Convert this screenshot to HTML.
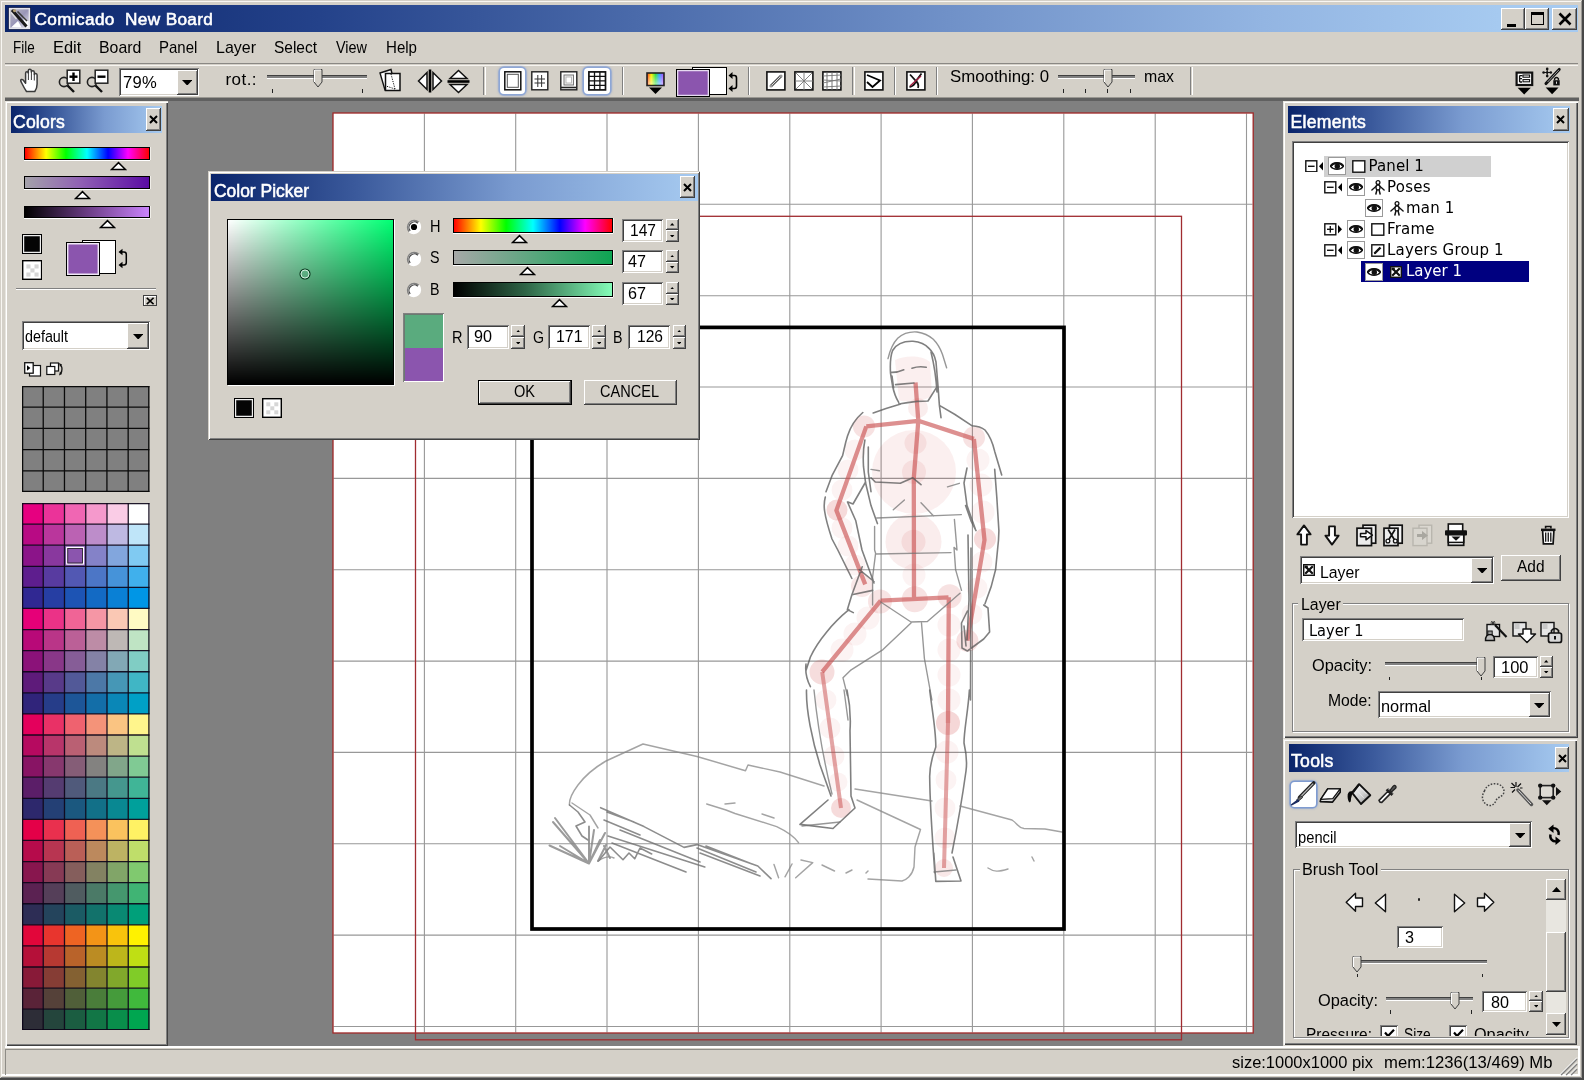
<!DOCTYPE html>
<html><head><meta charset="utf-8"><title>Comicado New Board</title>
<style>
html,body{margin:0;padding:0;}
body{width:1584px;height:1080px;overflow:hidden;background:#d4d0c8;position:relative;font-family:"Liberation Sans",sans-serif;}
#app{position:absolute;left:0;top:0;width:1584px;height:1080px;overflow:hidden;filter:blur(0.55px);}
#app div,#app span,#app svg{position:absolute;display:block;}
#app span{white-space:nowrap;}
</style></head><body><div id="app">
<div style="left:0px;top:0px;width:1584px;height:1080px;background:#d4d0c8;"></div>
<div style="left:1px;top:1px;width:1581px;height:1.2px;background:#f8f6f2;"></div>
<div style="left:1px;top:1px;width:1.2px;height:1076.5px;background:#f8f6f2;"></div>
<div style="left:0px;top:1077.8px;width:1584px;height:2.2px;background:#484848;"></div>
<div style="left:1582.2px;top:0px;width:1.8px;height:1080px;background:#484848;"></div>
<div style="left:2px;top:1074.3px;width:1578px;height:1.6px;background:#fff;"></div>
<div style="left:1px;top:1077px;width:1581px;height:1px;background:#808080;"></div>
<div style="left:1581px;top:1px;width:1.2px;height:1077px;background:#9a9894;"></div>
<div style="left:5px;top:5px;width:1573px;height:27.3px;background:linear-gradient(90deg,#0a246a 0%,#24428a 20%,#4a6aaa 40%,#7091c8 60%,#93b5e2 80%,#a6caf0 95%);"></div>
<svg style="left:8px;top:7px;" width="23" height="23" viewBox="0 0 23 23"><defs><linearGradient id="ig" x1="0" y1="0" x2="1" y2="1"><stop offset="0" stop-color="#b8b8c0"/><stop offset=".5" stop-color="#9a96b8"/><stop offset="1" stop-color="#e8e8f0"/></linearGradient></defs><rect x=".3" y=".3" width="22.4" height="22.4" fill="#0c1234"/><rect x="1.6" y="1.6" width="19.8" height="19.8" fill="url(#ig)" stroke="#e4e4ea" stroke-width="1.5"/><path d="M3 20.5L10 14L13.5 20.5Z" fill="#fff"/><path d="M15 9L20.5 14.5V20.5H17Z" fill="#fff" fill-opacity=".9"/><path d="M4 3L18.5 19.5" stroke="#1a1a1a" stroke-width="3"/><path d="M9.5 4.5L19 14" stroke="#3a3a3a" stroke-width="1.6"/><path d="M3 5.5L8.5 12" stroke="#ddd" stroke-width="1.3"/><circle cx="6.5" cy="3.6" r="1.6" fill="#b09c70"/></svg>
<span style="left:34.5px;top:8.0px;font-size:17.2px;line-height:22px;font-family:'Liberation Sans',sans-serif;color:#fff;letter-spacing:0.36px;-webkit-text-stroke:0.55px #fff;">Comicado&nbsp; New Board</span>
<div style="left:1501px;top:7.5px;width:24px;height:22.5px;background:#d4d0c8;box-shadow:inset -1px -1px #404040,inset 1px 1px #fff,inset -2px -2px #808080,inset 2px 2px #d4d0c8;"></div>
<div style="left:1525px;top:7.5px;width:24px;height:22.5px;background:#d4d0c8;box-shadow:inset -1px -1px #404040,inset 1px 1px #fff,inset -2px -2px #808080,inset 2px 2px #d4d0c8;"></div>
<div style="left:1552px;top:7.5px;width:24.5px;height:22.5px;background:#d4d0c8;box-shadow:inset -1px -1px #404040,inset 1px 1px #fff,inset -2px -2px #808080,inset 2px 2px #d4d0c8;"></div>
<div style="left:1507px;top:24px;width:9px;height:3px;background:#000;"></div>
<div style="left:1530.5px;top:11.5px;width:13px;height:13px;border:1.5px solid #000;border-top-width:3px;box-sizing:border-box;"></div>
<svg style="left:1557.5px;top:11.5px;" width="14" height="14" viewBox="0 0 14 14"><path d="M1.5 1.5L12.5 12.5M12.5 1.5L1.5 12.5" stroke="#000" stroke-width="2.6" fill="none"/></svg>
<span style="left:12.7px;top:36.7px;font-size:17px;line-height:22px;font-family:'Liberation Sans',sans-serif;color:#000;transform:scaleX(0.7921);transform-origin:0 50%;">File</span>
<span style="left:52.7px;top:36.7px;font-size:17px;line-height:22px;font-family:'Liberation Sans',sans-serif;color:#000;transform:scaleX(0.9661);transform-origin:0 50%;">Edit</span>
<span style="left:98.7px;top:36.7px;font-size:17px;line-height:22px;font-family:'Liberation Sans',sans-serif;color:#000;transform:scaleX(0.9324);transform-origin:0 50%;">Board</span>
<span style="left:159.3px;top:36.7px;font-size:17px;line-height:22px;font-family:'Liberation Sans',sans-serif;color:#000;transform:scaleX(0.8808);transform-origin:0 50%;">Panel</span>
<span style="left:215.7px;top:36.7px;font-size:17px;line-height:22px;font-family:'Liberation Sans',sans-serif;color:#000;transform:scaleX(0.9406);transform-origin:0 50%;">Layer</span>
<span style="left:274.3px;top:36.7px;font-size:17px;line-height:22px;font-family:'Liberation Sans',sans-serif;color:#000;transform:scaleX(0.9101);transform-origin:0 50%;">Select</span>
<span style="left:335.7px;top:36.7px;font-size:17px;line-height:22px;font-family:'Liberation Sans',sans-serif;color:#000;transform:scaleX(0.8483);transform-origin:0 50%;">View</span>
<span style="left:385.7px;top:36.7px;font-size:17px;line-height:22px;font-family:'Liberation Sans',sans-serif;color:#000;transform:scaleX(0.8866);transform-origin:0 50%;">Help</span>
<div style="left:5px;top:62.8px;width:1573px;height:1.2px;background:#8a8884;"></div>
<div style="left:5px;top:64.6px;width:1573px;height:1.3px;background:#f6f4f0;"></div>
<div style="left:5px;top:98.3px;width:1574px;height:2.3px;background:#606060;"></div>
<div style="left:5px;top:97.3px;width:1574px;height:1px;background:#9a9892;"></div>
<svg style="left:19px;top:67px;" width="22" height="27" viewBox="0 0 22 27"><path d="M7.5 24.5C5 21 3.5 17.5 1.8 14.2C1.2 12.6 3 11.8 4.2 13L6.6 16.2V6.2C6.6 4.4 9.2 4.4 9.3 6.2V3.6C9.4 1.8 12.2 1.8 12.3 3.6V5C12.5 3.4 15.2 3.5 15.3 5.2V7.5C15.6 6 18 6.2 18.1 8V17C18.1 20.5 17.2 22.5 15.8 24.5Z" fill="#fff" stroke="#3a3a3a" stroke-width="1.5" stroke-linejoin="round"/><path d="M9.4 6.5V13M12.4 5V13M15.3 7.5V13.5" stroke="#3a3a3a" stroke-width="1" fill="none"/></svg>
<svg style="left:58.3px;top:66px;" width="23" height="28" viewBox="0 0 23 28"><circle cx="6" cy="16" r="4.6" fill="#d4d0c8" stroke="#222" stroke-width="1.6"/><path d="M9.5 19.5L16 26" stroke="#111" stroke-width="2.4"/><rect x="9.2" y="4.2" width="12.6" height="13" fill="#fff" stroke="#222" stroke-width="1.5"/><path d="M11.5 10.7H19.5" stroke="#000" stroke-width="2.4"/><path d="M15.5 6.5V15" stroke="#000" stroke-width="2.4"/></svg>
<svg style="left:86.2px;top:66px;" width="23" height="28" viewBox="0 0 23 28"><circle cx="6" cy="16" r="4.6" fill="#d4d0c8" stroke="#222" stroke-width="1.6"/><path d="M9.5 19.5L16 26" stroke="#111" stroke-width="2.4"/><rect x="9.2" y="4.2" width="12.6" height="13" fill="#fff" stroke="#222" stroke-width="1.5"/><path d="M11.5 10.7H19.5" stroke="#000" stroke-width="2.4"/></svg>
<div style="left:119px;top:68px;width:80px;height:27.5px;background:#fff;box-shadow:inset 1px 1px #808080,inset -1px -1px #fff,inset 2px 2px #404040,inset -2px -2px #d4d0c8;"></div>
<div style="left:176.5px;top:70px;width:21.5px;height:24.5px;background:#d4d0c8;box-shadow:inset -1px -1px #404040,inset 1px 1px #fff,inset -2px -2px #808080,inset 2px 2px #d4d0c8;"></div>
<svg style="left:182.05px;top:79.75px;" width="10.4" height="5.6" viewBox="0 0 10.4 5.6"><path d="M0 0H10.4L5.2 5.6Z" fill="#000"/></svg>
<span style="left:123px;top:71.7px;font-size:16.6px;line-height:22px;font-family:'Liberation Sans',sans-serif;color:#000;letter-spacing:0.26px;">79%</span>
<span style="left:225.5px;top:68.8px;font-size:17px;line-height:22px;font-family:'Liberation Sans',sans-serif;color:#000;letter-spacing:0.44px;">rot.:</span>
<div style="left:267px;top:74.5px;width:100px;height:3px;background:#808080;box-shadow:0 1px #fff,inset 0 1px #404040;"></div>
<svg style="left:312.8px;top:69px;" width="11" height="19" viewBox="0 0 11 19"><path d="M1 0.5H9V13L5.0 18L1 13Z" fill="#d4d0c8" stroke="#404040" stroke-width="1"/><path d="M1.5 13V1H8" fill="none" stroke="#fff" stroke-width="1"/></svg>
<div style="left:271.5px;top:89px;width:1.3px;height:3.5px;background:#222;"></div>
<div style="left:361.5px;top:89px;width:1.3px;height:3.5px;background:#222;"></div>
<svg style="left:378px;top:68px;" width="24" height="24" viewBox="0 0 24 24"><path d="M2 5L13 1.5L17.5 20L7 22Z" fill="#fff" stroke="#111" stroke-width="1.4"/><rect x="7.5" y="5.5" width="14.5" height="17" fill="#fff" stroke="#111" stroke-width="1.5"/><path d="M13 6L17 21M17 21L8 18" stroke="#111" stroke-width="1" stroke-dasharray="1.2 1.2" fill="none"/></svg>
<svg style="left:417px;top:69px;" width="26" height="24" viewBox="0 0 26 24"><path d="M10 3.5V20.5L1.5 12Z M16 3.5V20.5L24.5 12Z" fill="#fff" stroke="#111" stroke-width="1.5" stroke-linejoin="miter"/><path d="M13 0.5V23.5" stroke="#000" stroke-width="2.6"/></svg>
<svg style="left:447px;top:69px;" width="24" height="25" viewBox="0 0 24 25"><path d="M3 9.5H20L11.5 1.5Z M3 15.5H20L11.5 23.5Z" fill="#fff" stroke="#111" stroke-width="1.5"/><path d="M0.5 12.5H22.5" stroke="#000" stroke-width="2.6"/></svg>
<div style="left:483.3px;top:67px;width:1.2px;height:28px;background:#808080;"></div>
<div style="left:484.6px;top:67px;width:1.2px;height:28px;background:#fff;"></div>
<div style="left:621.7px;top:67px;width:1.2px;height:28px;background:#808080;"></div>
<div style="left:623px;top:67px;width:1.2px;height:28px;background:#fff;"></div>
<div style="left:747.8px;top:67px;width:1.2px;height:28px;background:#808080;"></div>
<div style="left:749.1px;top:67px;width:1.2px;height:28px;background:#fff;"></div>
<div style="left:852.3px;top:67px;width:1.2px;height:28px;background:#808080;"></div>
<div style="left:853.6px;top:67px;width:1.2px;height:28px;background:#fff;"></div>
<div style="left:894px;top:67px;width:1.2px;height:28px;background:#808080;"></div>
<div style="left:895.3px;top:67px;width:1.2px;height:28px;background:#fff;"></div>
<div style="left:935.7px;top:67px;width:1.2px;height:28px;background:#808080;"></div>
<div style="left:937px;top:67px;width:1.2px;height:28px;background:#fff;"></div>
<div style="left:1190.3px;top:67px;width:1.2px;height:28px;background:#808080;"></div>
<div style="left:1191.6px;top:67px;width:1.2px;height:28px;background:#fff;"></div>
<div style="left:499.5px;top:68px;width:25px;height:26px;background:#fff;border-radius:4px;box-shadow:0 0 0 1.5px #8da6d6, 0 0 2px 2px rgba(120,150,210,.55);"></div>
<svg style="left:503.5px;top:71px;" width="18" height="20" viewBox="0 0 18 20"><rect x=".8" y=".8" width="16" height="18" fill="#fff" stroke="#111" stroke-width="1.5"/><rect x="3.3" y="3.3" width="11" height="13" fill="#fff" stroke="#555" stroke-width="1"/></svg>
<svg style="left:531px;top:71px;" width="18" height="20" viewBox="0 0 18 20"><rect x=".8" y=".8" width="16" height="18" fill="#fff" stroke="#222" stroke-width="1.4"/><path d="M6.8 4V16M10.6 4V16M3.5 8H14M3.5 12H14" stroke="#333" stroke-width="1"/></svg>
<svg style="left:559.5px;top:71px;" width="18" height="20" viewBox="0 0 18 20"><rect x=".8" y=".8" width="16" height="18" fill="#fff" stroke="#222" stroke-width="1.4"/><rect x="4" y="4" width="9.5" height="10" fill="#eee" stroke="#777" stroke-width="1"/><rect x="6" y="6" width="5.5" height="6" fill="#fff" stroke="#aaa" stroke-width=".8"/><path d="M1 16.5H16.5" stroke="#222" stroke-width="1.6"/></svg>
<div style="left:583.5px;top:68px;width:26px;height:26px;background:#fff;border-radius:4px;box-shadow:0 0 0 1.5px #8da6d6, 0 0 2px 2px rgba(120,150,210,.55);"></div>
<svg style="left:587.5px;top:71px;" width="19" height="20" viewBox="0 0 19 20"><rect x=".9" y=".9" width="16.6" height="18" fill="#fff" stroke="#111" stroke-width="1.7"/><path d="M6.5 1V19M11.9 1V19M1 5.3H17.5M1 9.8H17.5M1 14.3H17.5" stroke="#111" stroke-width="1.3"/></svg>
<svg style="left:646px;top:71.5px;" width="19" height="24" viewBox="0 0 19 24"><defs><linearGradient id="rb" x1="0" x2="1" y1="0" y2="0"><stop offset="0" stop-color="#ff3020"/><stop offset=".25" stop-color="#fff000"/><stop offset=".5" stop-color="#30e040"/><stop offset=".72" stop-color="#30a0ff"/><stop offset="1" stop-color="#c040ff"/></linearGradient><linearGradient id="rbw" x1="0" x2="0" y1="0" y2="1"><stop offset="0" stop-color="#fff" stop-opacity=".0"/><stop offset="1" stop-color="#fff" stop-opacity=".55"/></linearGradient></defs><rect x="1" y="1" width="17" height="12.5" fill="url(#rb)" stroke="#222" stroke-width="1.6"/><rect x="2" y="2" width="15" height="10.5" fill="url(#rbw)"/><path d="M3 15.5H16L9.5 22Z" fill="#000"/></svg>
<div style="left:692px;top:66.5px;width:34.5px;height:28.5px;background:#fff;border:1.5px solid #000;box-sizing:border-box;"></div>
<div style="left:676px;top:69px;width:34px;height:27.5px;background:#8b55ae;border:1.5px solid #000;box-sizing:border-box;box-shadow:inset 0 0 0 1.3px #e6daf0;"></div>
<svg style="left:728px;top:71px;" width="11" height="22" viewBox="0 0 11 22"><path d="M3 4.5H6.5Q8.5 4.5 8.5 7V15Q8.5 17.5 6.5 17.5H3" fill="none" stroke="#000" stroke-width="1.6"/><path d="M0.5 4.5L4.5 1V8Z M0.5 17.5L4.5 14V21Z" fill="#000"/></svg>
<svg style="left:765.5px;top:71px;" width="20" height="20" viewBox="0 0 20 20"><rect x=".9" y=".9" width="18" height="18" fill="#fff" stroke="#111" stroke-width="1.6"/><path d="M5 15L15 5" stroke="#555" stroke-width="3"/><path d="M5 15L15 5" stroke="#ddd" stroke-width="1"/><circle cx="5" cy="15" r="1.6" fill="#999"/><circle cx="15" cy="5" r="1.6" fill="#999"/></svg>
<svg style="left:793.5px;top:71px;" width="20" height="20" viewBox="0 0 20 20"><rect x=".9" y=".9" width="18" height="18" fill="#fff" stroke="#111" stroke-width="1.6"/><path d="M10 1V19M1 10H19M2 2L18 18M18 2L2 18" stroke="#777" stroke-width=".9"/></svg>
<svg style="left:821.5px;top:71px;" width="20" height="20" viewBox="0 0 20 20"><rect x=".9" y=".9" width="18" height="18" fill="#fff" stroke="#111" stroke-width="1.6"/><path d="M5 1V19M10 1V19M15 1V19" stroke="#666" stroke-width=".9"/><path d="M1 5L19 4M1 9L19 10M1 12L19 8M1 16L19 15" stroke="#777" stroke-width=".9"/></svg>
<svg style="left:864px;top:71px;" width="20" height="20" viewBox="0 0 20 20"><rect x=".9" y=".9" width="18" height="18" fill="#fff" stroke="#111" stroke-width="1.6"/><path d="M3 4L16 9.5L8.5 16L3 11" fill="none" stroke="#000" stroke-width="1.8"/></svg>
<svg style="left:906.3px;top:71px;" width="20" height="20" viewBox="0 0 20 20"><rect x=".9" y=".9" width="18" height="18" fill="#fff" stroke="#111" stroke-width="1.6"/><path d="M4 3.5L10 10L15.5 2.5M10 10C9 13 6 15.5 3.5 16M10 10C12 12 13 14 12 17" fill="none" stroke="#111" stroke-width="1.8"/><path d="M4 15L15 5" stroke="#a02040" stroke-width="1.4"/></svg>
<span style="left:950px;top:66.3px;font-size:17px;line-height:22px;font-family:'Liberation Sans',sans-serif;color:#000;transform:scaleX(0.9883);transform-origin:0 50%;">Smoothing: 0</span>
<div style="left:1058px;top:74.5px;width:76.5px;height:3px;background:#808080;box-shadow:0 1px #fff,inset 0 1px #404040;"></div>
<svg style="left:1102.5px;top:69px;" width="11" height="19" viewBox="0 0 11 19"><path d="M1 0.5H9V13L5.0 18L1 13Z" fill="#d4d0c8" stroke="#404040" stroke-width="1"/><path d="M1.5 13V1H8" fill="none" stroke="#fff" stroke-width="1"/></svg>
<div style="left:1062.5px;top:89px;width:1.3px;height:3.5px;background:#222;"></div>
<div style="left:1084.8px;top:89px;width:1.3px;height:3.5px;background:#222;"></div>
<div style="left:1107.1px;top:89px;width:1.3px;height:3.5px;background:#222;"></div>
<div style="left:1129.5px;top:89px;width:1.3px;height:3.5px;background:#222;"></div>
<span style="left:1144px;top:66.3px;font-size:17px;line-height:22px;font-family:'Liberation Sans',sans-serif;color:#000;transform:scaleX(0.9341);transform-origin:0 50%;">max</span>
<svg style="left:1514.5px;top:70.5px;" width="19" height="24.5" viewBox="0 0 19 24.5"><rect x="1.6" y="1.6" width="15.6" height="12.4" fill="#fff" stroke="#111" stroke-width="2.2"/><path d="M4.6 4.6H7.5M4.6 4.6V11M4.6 7.6H7M4.6 11H7" fill="none" stroke="#111" stroke-width="1.3"/><rect x="8" y="4" width="6.6" height="2.2" fill="#fff" stroke="#111" stroke-width="1.1"/><rect x="8" y="8.6" width="6.6" height="2.2" fill="#fff" stroke="#111" stroke-width="1.1"/><path d="M2.6 16.7H15.8L9.2 23.4Z" fill="#000"/></svg>
<svg style="left:1541.5px;top:66.5px;" width="20" height="28" viewBox="0 0 20 28"><path d="M17.2 2.4L4 16.6" stroke="#111" stroke-width="3" stroke-linecap="round"/><path d="M16.8 3L5.6 15" stroke="#999" stroke-width="1"/><path d="M5.2 1.6V9.4M1.3 5.5H9.1" stroke="#111" stroke-width="1.1"/><circle cx="5.2" cy="1.9" r="1.3" fill="#111"/><circle cx="5.2" cy="9.1" r="1.3" fill="#111"/><circle cx="1.6" cy="5.5" r="1.3" fill="#111"/><circle cx="8.8" cy="5.5" r="1.3" fill="#111"/><circle cx="5.2" cy="5.5" r="1.2" fill="#111"/><rect x="11.3" y="13.2" width="6.4" height="5.2" fill="#111"/><path d="M12.6 13.2V11.6Q14.5 9.4 16.4 11.6V13.2" fill="none" stroke="#111" stroke-width="1.4"/><rect x="14" y="14.6" width="1" height="2.2" fill="#ddd"/><path d="M3.7 20.6H16.6L10.1 27.3Z" fill="#000"/></svg>
<div style="left:167px;top:100.5px;width:1116px;height:945.5px;background:#808080;"></div>
<svg style="left:0;top:0" width="1584" height="1080" viewBox="0 0 1584 1080"><rect x="333" y="113" width="920" height="920" fill="#fff"/><path d="M424.4 113.5V1032.5M515.7 113.5V1032.5M607.0 113.5V1032.5M698.4 113.5V1032.5M789.8 113.5V1032.5M881.1 113.5V1032.5M972.4 113.5V1032.5M1063.8 113.5V1032.5M1155.2 113.5V1032.5M1246.5 113.5V1032.5M333.5 204.3H1252.5M333.5 295.7H1252.5M333.5 387.0H1252.5M333.5 478.4H1252.5M333.5 569.8H1252.5M333.5 661.1H1252.5M333.5 752.4H1252.5M333.5 843.8H1252.5M333.5 935.1H1252.5M333.5 1026.5H1252.5" stroke="#989898" stroke-width="1.1" fill="none"/><path d="M895 360C905 355 922 355 930 362L932 396C922 402 906 403 899 400Z" fill="#d04a4a" fill-opacity=".09"/><circle cx="918" cy="408" r="10" fill="#d04a4a" fill-opacity="0.1"/><circle cx="915.5" cy="443" r="11" fill="#d04a4a" fill-opacity="0.1"/><circle cx="914" cy="472" r="42" fill="#d04a4a" fill-opacity="0.085"/><circle cx="914" cy="472" r="12" fill="#d04a4a" fill-opacity="0.1"/><circle cx="864" cy="426.4" r="11" fill="#d04a4a" fill-opacity="0.16"/><circle cx="974" cy="437.5" r="11" fill="#d04a4a" fill-opacity="0.16"/><circle cx="837" cy="510" r="10.5" fill="#d04a4a" fill-opacity="0.2"/><circle cx="985" cy="539" r="11" fill="#d04a4a" fill-opacity="0.2"/><circle cx="913.5" cy="541.7" r="28" fill="#d04a4a" fill-opacity="0.1"/><circle cx="913.5" cy="541.7" r="12" fill="#d04a4a" fill-opacity="0.11"/><circle cx="914" cy="575" r="11.5" fill="#d04a4a" fill-opacity="0.065"/><circle cx="914.8" cy="599.3" r="13" fill="#d04a4a" fill-opacity="0.16"/><circle cx="949.6" cy="596.3" r="12" fill="#d04a4a" fill-opacity="0.16"/><circle cx="880" cy="601.5" r="12" fill="#d04a4a" fill-opacity="0.15"/><circle cx="967.4" cy="640.7" r="11" fill="#d04a4a" fill-opacity="0.17"/><circle cx="862" cy="586" r="11" fill="#d04a4a" fill-opacity="0.13"/><circle cx="822" cy="672" r="12.5" fill="#d04a4a" fill-opacity="0.19"/><circle cx="948" cy="723" r="12" fill="#d04a4a" fill-opacity="0.22"/><circle cx="841" cy="808" r="10" fill="#d04a4a" fill-opacity="0.2"/><circle cx="944" cy="868" r="9" fill="#d04a4a" fill-opacity="0.13"/><circle cx="855" cy="450" r="10.5" fill="#d04a4a" fill-opacity="0.065"/><circle cx="848" cy="470" r="10.5" fill="#d04a4a" fill-opacity="0.065"/><circle cx="842" cy="490" r="10.5" fill="#d04a4a" fill-opacity="0.065"/><circle cx="842" cy="528" r="10.5" fill="#d04a4a" fill-opacity="0.065"/><circle cx="848" cy="546" r="10.5" fill="#d04a4a" fill-opacity="0.065"/><circle cx="855" cy="565" r="10.5" fill="#d04a4a" fill-opacity="0.065"/><circle cx="978" cy="460" r="11.5" fill="#d04a4a" fill-opacity="0.065"/><circle cx="981" cy="485" r="11.5" fill="#d04a4a" fill-opacity="0.065"/><circle cx="983" cy="512" r="11.5" fill="#d04a4a" fill-opacity="0.065"/><circle cx="982" cy="562" r="10.5" fill="#d04a4a" fill-opacity="0.065"/><circle cx="977" cy="588" r="10.5" fill="#d04a4a" fill-opacity="0.065"/><circle cx="972" cy="614" r="10.5" fill="#d04a4a" fill-opacity="0.065"/><circle cx="868" cy="618" r="11.5" fill="#d04a4a" fill-opacity="0.065"/><circle cx="855" cy="634" r="11.5" fill="#d04a4a" fill-opacity="0.065"/><circle cx="842" cy="650" r="11.5" fill="#d04a4a" fill-opacity="0.065"/><circle cx="949" cy="625" r="11.5" fill="#d04a4a" fill-opacity="0.065"/><circle cx="949" cy="650" r="11.5" fill="#d04a4a" fill-opacity="0.065"/><circle cx="949" cy="675" r="11.5" fill="#d04a4a" fill-opacity="0.065"/><circle cx="949" cy="700" r="11.5" fill="#d04a4a" fill-opacity="0.065"/><circle cx="947" cy="752" r="11.5" fill="#d04a4a" fill-opacity="0.065"/><circle cx="946" cy="780" r="10.5" fill="#d04a4a" fill-opacity="0.065"/><circle cx="945" cy="808" r="10.5" fill="#d04a4a" fill-opacity="0.065"/><circle cx="945" cy="838" r="10.5" fill="#d04a4a" fill-opacity="0.065"/><circle cx="826" cy="700" r="10.5" fill="#d04a4a" fill-opacity="0.065"/><circle cx="830" cy="728" r="10.5" fill="#d04a4a" fill-opacity="0.065"/><circle cx="834" cy="756" r="10.5" fill="#d04a4a" fill-opacity="0.065"/><circle cx="838" cy="782" r="9.5" fill="#d04a4a" fill-opacity="0.065"/><path d="M915.5 382.5L918.3 420.8L913.8 478L914 598.5M866.3 426.4L918.3 420.8L973.9 438.9M866.3 426.4L836.4 510.4L865.2 584.4M973.9 438.9L984.5 540L967.4 640.7M880.7 600.7L948.5 597.3M880.7 600.7L822.2 671.9M948.8 597.3L948 723" stroke="#c84c4c" stroke-opacity=".62" stroke-width="4.3" fill="none" stroke-linejoin="round"/><path d="M822.2 671.9L841 808M948 723L944 868" stroke="#c84c4c" stroke-opacity=".5" stroke-width="4" fill="none"/><path d="M890.5 373C890 364 890.5 356 892.6 350.5C897 343 905 341 913 341.3C921 342 926 345 929 348.4C933 352 935 357 936 362L938 386L939.4 405.4L941 417.7 M890.5 373L892.6 386C894 393 896 398 898.7 402.4 M892 376L893.6 388 M898.7 404C904 403 911 402 917 401.4L928 401L936.4 387.6 M931 352C934 364 936 376 937 392 M891.6 372.4C896 372.5 900 371.5 903.8 369.8M912 368.3C917 366.5 922 366.5 926.2 367.3 M895.6 384.6L914 383 M900.7 404L886 408.5L873.2 413 M939.4 405.4L955 414.5L971.8 425.7 M862.8 412.5C854 420 850 428 847.5 436C845 444 844 450 842.6 455.6L832 475.7L826 491.7 M825.3 497C824 502 824 507 824.6 511C826 521 829 530 832 539L837.8 550L851.9 578.5 M847.5 502L855.8 520.8L862 550L874 583 M864.9 440C863 449 863 458 863.5 466.7L865.6 483L871 505.6L877.4 523.6 M868.3 447L868.3 472L871 491.7 M865.6 482L853 504L848 502 M871 477.8L875.3 482L900.3 483.3L912.8 477.8L921 484.7 M967 468L964 483L967 505.6L975.3 529 M971.8 425.7C978 426 982 427.5 985 430C990 436 993 444 994.7 451.4L1001.7 475 M994.7 469.4L996.8 497.2L998.9 530.6L998.5 540L995.6 569.6C993 582 989 594 985 603.7 M965.6 505.6L971 520.8L976 530.6 M968 535L969 600L967 640 M971 548L970.5 700 M983.7 605L988 608L989.6 631.9L983.7 639L967.4 651L962 648L961.5 623L967.4 611 M964 626L966 646 M862.2 566.7L851.9 594.8L847.4 609.6L853.3 612.6 M851.9 594.8L872.6 590.4 M859.3 569.6L874 581.5 M848.9 609.6C840 617 833 624 826.7 631.9C820 640 814 649 810.4 657L806 670.4 M806 664C805 672 807 680 810.4 686.7 M806.5 690C806 710 812 740 820 765L831 796 M847 690C850 704 851 716 850 730.7L851 796 M828 800L800 824.4L833 828.5L855 808L851 796 M929.7 690C932 710 936 730 935.8 747C931 760 929.5 770 929.7 777.6C930 810 933 845 934.8 873 M969.4 690C968 712 964 730 964 743C967 756 967 764 966 771C962 800 957 828 952 853 M933.8 853L935.8 881.4L961 881L953 857" stroke="#5c5c5c" stroke-opacity=".78" stroke-width="1.6" fill="none" stroke-linecap="round" stroke-linejoin="round"/><path d="M888 358.6C890 350 893 343 897.7 338.2C903 333.5 910 331.5 917 332C924 333 929 335.5 933.3 339.3C938 344 940.5 349 942.5 354.5L946.6 367.8 M871 469.4L879.4 470.8M947.5 486.8L959.3 483.3 M893.3 509.7L904.4 500M921 502.8L933.6 516 M876.7 518L961.4 514.6 M875.6 554L951 552.6 M874.6 526.4L874.6 550L875.6 553.3L872.6 577L872.6 605 M954.4 519.4L957 550L954 547.4L955.6 569.6L961.5 590.4 M880.7 602L911 622L927.4 621.5L960 593.3 M911 623L883 649.6L850.4 670.4L843 677.8L847.4 695.6 M921.5 623L924.4 658.5L931.9 700 M814 690C818 730 826 770 832 794 M802 826L840 822 M934 872L956 870 M844 690L848 720" stroke="#747474" stroke-opacity=".75" stroke-width="1.4" fill="none" stroke-linecap="round" stroke-linejoin="round"/><path d="M643 744L606 761C594 768 584 777 578 785C572 793 569 800 569.5 805 M643 744L697 756.5L745.5 770.7L748 765L780 772L824 786 M855 789L932 801 M960 806L1012 820C1018 824 1018 828 1024 828.5L1045 829L1062 832 M857 800L920.5 829.5L915 847L914 867C912 876 906 880 902 881L868 879 M706.7 804L726 810L735 813.5L776.7 826.6C786 831 794 836 798.5 842.7 M725 804L735 803M762 814L774 818 M572 803L590 815L598 828 M598 861C604 857 610 856 614 858 M774 864.5L778.6 877.7M792 864L785 876.8M795.7 877.7L812.7 862.6L801 860M822 865L834.5 871 M846 873L852 870M866 873L868 871 M988 868C994 872 998 872 1008 869M1032 857L1034 861" stroke="#868686" stroke-opacity=".75" stroke-width="1.45" fill="none" stroke-linecap="round" stroke-linejoin="round"/><path d="M600.6 807.7L644 826.6L684 847.4L697 844.6L757.8 866L771 878.7 M607 812L634 822 M604 820L640 835 M608 836L704.8 867 M612 843L686 872 M620 830L700 862 M697 848L756 872 M700 853L760 876 M706 846L752 864 M598.7 860.7L610 847L623 859.7L629 853L634.7 858.8L640 848L651.7 854 M569.5 805L578 812L585 822L576 826L582 836L588 840" stroke="#707070" stroke-opacity=".8" stroke-width="1.6" fill="none" stroke-linecap="round" stroke-linejoin="round"/><path d="M589 863.5L555 818M589 863.5L549.5 845.5M589 863.5L589 826.6M589 863.5L605 833M589 863.5L553 822M589 863.5L594 830M589 863.5L600 840M589 863.5L560 846M598 861L606 845M610 858L604 846" stroke="#8a8a8a" stroke-opacity=".85" stroke-width="2" fill="none" stroke-linecap="round"/><rect x="532" y="327.4" width="532" height="601.6" fill="none" stroke="#000" stroke-width="3.7"/><rect x="333" y="113" width="920.2" height="920" fill="none" stroke="#a02c2c" stroke-width="1.35"/><rect x="415.5" y="216.3" width="766" height="823.5" fill="none" stroke="#a02c30" stroke-width="1.3"/></svg>
<div style="left:5px;top:1046px;width:1574px;height:1.6px;background:#fff;"></div>
<div style="left:5px;top:1049.2px;width:1573.5px;height:1.3px;background:#8e8c86;"></div>
<div style="left:5px;top:1049.2px;width:1.3px;height:25.5px;background:#8e8c86;"></div>
<div style="left:1578.4px;top:1046px;width:1.5px;height:29.8px;background:#fff;"></div>
<div style="left:5px;top:100.6px;width:162.5px;height:945.4px;background:#d4d0c8;box-shadow:inset 1px 1px #e8e6e0,inset 2px 2px #fff,inset -1px -1px #404040,inset -2px -2px #808080;"></div>
<div style="left:10.5px;top:105.5px;width:151px;height:27.5px;background:linear-gradient(90deg,#0a246a 0%,#3b5a9c 30%,#7a9bd0 62%,#a6caf0 100%);"></div>
<span style="left:13px;top:110.7px;font-size:17.6px;line-height:22px;font-family:'Liberation Sans',sans-serif;color:#fff;letter-spacing:0.19px;-webkit-text-stroke:0.55px #fff;">Colors</span>
<div style="left:145.5px;top:108px;width:15.5px;height:22.5px;background:#d4d0c8;box-shadow:inset -1px -1px #404040,inset 1px 1px #fff,inset -2px -2px #808080,inset 2px 2px #d4d0c8;"></div>
<svg style="left:148.75px;top:114.75px;" width="9" height="9" viewBox="0 0 9 9"><path d="M1 1L8 8M8 1L1 8" stroke="#000" stroke-width="2" fill="none"/></svg>
<div style="left:24px;top:147px;width:125.5px;height:12.6px;background:linear-gradient(90deg,#f00 0%,#ff0 17%,#0f0 33%,#0ff 50%,#00f 67%,#f0f 83%,#f00 100%);border:1.3px solid #000;box-sizing:border-box;box-shadow:0 1px 0 #fff,1px 0 0 #f0eee8;"></div>
<svg style="left:110.3px;top:160.8px;" width="17" height="10.3" viewBox="0 0 17 10.3"><path d="M1.5 8.5H15.5L8.5 1.6Z" fill="#fff" stroke="#000" stroke-width="1.5" stroke-linejoin="miter"/></svg>
<div style="left:24px;top:176.2px;width:125.5px;height:12.6px;background:linear-gradient(90deg,#a4a2aa,#9060b4 45%,#5a0ca4);border:1.3px solid #000;box-sizing:border-box;box-shadow:0 1px 0 #fff,1px 0 0 #f0eee8;"></div>
<svg style="left:74px;top:189.9px;" width="17" height="10.3" viewBox="0 0 17 10.3"><path d="M1.5 8.5H15.5L8.5 1.6Z" fill="#fff" stroke="#000" stroke-width="1.5" stroke-linejoin="miter"/></svg>
<div style="left:24px;top:205.6px;width:125.5px;height:12.6px;background:linear-gradient(90deg,#000,#6a3c84 50%,#ca84fc);border:1.3px solid #000;box-sizing:border-box;box-shadow:0 1px 0 #fff,1px 0 0 #f0eee8;"></div>
<svg style="left:98.5px;top:219px;" width="17" height="10.3" viewBox="0 0 17 10.3"><path d="M1.5 8.5H15.5L8.5 1.6Z" fill="#fff" stroke="#000" stroke-width="1.5" stroke-linejoin="miter"/></svg>
<div style="left:22px;top:234px;width:20.3px;height:20px;background:#050505;border:1.3px solid #000;box-sizing:border-box;box-shadow:inset 0 0 0 1.2px #eee;"></div>
<svg style="left:22px;top:260px;" width="20.3" height="20" viewBox="0 0 20.3 20"><rect width="20.3" height="20" fill="#fff"/><rect x="4.4" y="4.4" width="4.1" height="4.1" fill="#d6d6d6"/><rect x="4.4" y="12.5" width="4.1" height="4.1" fill="#d6d6d6"/><rect x="8.4" y="8.4" width="4.1" height="4.1" fill="#d6d6d6"/><rect x="12.5" y="4.4" width="4.1" height="4.1" fill="#d6d6d6"/><rect x="12.5" y="12.5" width="4.1" height="4.1" fill="#d6d6d6"/><rect x=".7" y=".7" width="18.900000000000002" height="18.6" fill="none" stroke="#000" stroke-width="1.4"/></svg>
<div style="left:82px;top:240px;width:34px;height:34px;background:#fff;border:1.4px solid #000;box-sizing:border-box;"></div>
<div style="left:65.8px;top:242.4px;width:34px;height:34px;background:#8b55ae;border:1.4px solid #000;box-sizing:border-box;box-shadow:inset 0 0 0 1.4px #f0e8f6;"></div>
<svg style="left:117.5px;top:248px;" width="11" height="21" viewBox="0 0 11 21"><path d="M3 4H6Q8.3 4 8.3 6.5V14.5Q8.3 17 6 17H3" fill="none" stroke="#000" stroke-width="1.5"/><path d="M0.5 4L4.5 0.8V7.2Z M0.5 17L4.5 13.8V20.2Z" fill="#000"/></svg>
<div style="left:16px;top:288.3px;width:140px;height:1px;background:#808080;"></div>
<div style="left:16px;top:289.3px;width:140px;height:1px;background:#fff;"></div>
<div style="left:143.3px;top:294.7px;width:13.4px;height:11.8px;background:#d4d0c8;border:1px solid #404040;box-sizing:border-box;box-shadow:inset 1px 1px #fff;"></div>
<svg style="left:145.8px;top:296.6px;" width="8.4" height="8" viewBox="0 0 8.4 8"><path d="M.8 .8L7.6 7.2M7.6 .8L.8 7.2" stroke="#000" stroke-width="1.6"/></svg>
<div style="left:22.4px;top:321.4px;width:127.4px;height:29px;background:#fff;box-shadow:inset 1px 1px #808080,inset -1px -1px #fff,inset 2px 2px #404040,inset -2px -2px #d4d0c8;"></div>
<div style="left:127.3px;top:323.4px;width:21.5px;height:26px;background:#d4d0c8;box-shadow:inset -1px -1px #404040,inset 1px 1px #fff,inset -2px -2px #808080,inset 2px 2px #d4d0c8;"></div>
<svg style="left:132.85px;top:333.9px;" width="10.4" height="5.6" viewBox="0 0 10.4 5.6"><path d="M0 0H10.4L5.2 5.6Z" fill="#000"/></svg>
<span style="left:25.4px;top:325.3px;font-size:17.2px;line-height:22px;font-family:'Liberation Sans',sans-serif;color:#000;transform:scaleX(0.8326);transform-origin:0 50%;">default</span>
<svg style="left:24px;top:361.5px;" width="18" height="15" viewBox="0 0 18 15"><rect x="5.5" y="3.5" width="11" height="10.5" fill="#fff" stroke="#111" stroke-width="1.2"/><rect x=".7" y=".7" width="8.5" height="10.5" fill="#fff" stroke="#111" stroke-width="1.3"/><path d="M3 3.2L6.4 6L3 8.8Z" fill="#000"/></svg>
<svg style="left:45.5px;top:361.5px;" width="19" height="15" viewBox="0 0 19 15"><rect x="4.5" y="1" width="8" height="8" fill="#fff" stroke="#111" stroke-width="1.2"/><rect x=".8" y="4.5" width="8" height="8" fill="#fff" stroke="#111" stroke-width="1.2"/><path d="M14.5 2.5Q17.5 7 14.5 12" fill="none" stroke="#111" stroke-width="1.3"/><path d="M13 1L16 2.5L14 5Z M13 13.5L16 12L14 9.5Z" fill="#111"/></svg>
<svg style="left:22.4px;top:385.6px;" width="127.4" height="106" viewBox="0 0 127.4 106"><rect x="0" y="0" width="127.4" height="106" fill="#808080"/><path d="M0.60 0V106" stroke="#0a0a0a" stroke-width="1.3"/><path d="M21.23 0V106" stroke="#0a0a0a" stroke-width="1.3"/><path d="M42.47 0V106" stroke="#0a0a0a" stroke-width="1.3"/><path d="M63.70 0V106" stroke="#0a0a0a" stroke-width="1.3"/><path d="M84.93 0V106" stroke="#0a0a0a" stroke-width="1.3"/><path d="M106.17 0V106" stroke="#0a0a0a" stroke-width="1.3"/><path d="M126.80 0V106" stroke="#0a0a0a" stroke-width="1.3"/><path d="M0 0.60H127.4" stroke="#0a0a0a" stroke-width="1.3"/><path d="M0 21.20H127.4" stroke="#0a0a0a" stroke-width="1.3"/><path d="M0 42.40H127.4" stroke="#0a0a0a" stroke-width="1.3"/><path d="M0 63.60H127.4" stroke="#0a0a0a" stroke-width="1.3"/><path d="M0 84.80H127.4" stroke="#0a0a0a" stroke-width="1.3"/><path d="M0 105.40H127.4" stroke="#0a0a0a" stroke-width="1.3"/></svg>
<svg style="left:22.4px;top:503.2px;" width="127.5" height="527.3" viewBox="0 0 127.5 527.3"><rect x="0.00" y="0.00" width="21.35" height="21.19" fill="#e60080"/><rect x="21.25" y="0.00" width="21.35" height="21.19" fill="#eb3399"/><rect x="42.50" y="0.00" width="21.35" height="21.19" fill="#f066b3"/><rect x="63.75" y="0.00" width="21.35" height="21.19" fill="#f599cc"/><rect x="85.00" y="0.00" width="21.35" height="21.19" fill="#facce6"/><rect x="106.25" y="0.00" width="21.35" height="21.19" fill="#ffffff"/><rect x="0.00" y="21.09" width="21.35" height="21.19" fill="#b80a84"/><rect x="21.25" y="21.09" width="21.35" height="21.19" fill="#ba369c"/><rect x="42.50" y="21.09" width="21.35" height="21.19" fill="#bb62b3"/><rect x="63.75" y="21.09" width="21.35" height="21.19" fill="#bd8dca"/><rect x="85.00" y="21.09" width="21.35" height="21.19" fill="#beb9e2"/><rect x="106.25" y="21.09" width="21.35" height="21.19" fill="#bfe5f9"/><rect x="0.00" y="42.18" width="21.35" height="21.19" fill="#8b1489"/><rect x="21.25" y="42.18" width="21.35" height="21.19" fill="#89389e"/><rect x="42.50" y="42.18" width="21.35" height="21.19" fill="#865db3"/><rect x="63.75" y="42.18" width="21.35" height="21.19" fill="#8482c8"/><rect x="85.00" y="42.18" width="21.35" height="21.19" fill="#82a6dd"/><rect x="106.25" y="42.18" width="21.35" height="21.19" fill="#80caf2"/><rect x="0.00" y="63.28" width="21.35" height="21.19" fill="#5e1e8e"/><rect x="21.25" y="63.28" width="21.35" height="21.19" fill="#583ba0"/><rect x="42.50" y="63.28" width="21.35" height="21.19" fill="#5258b3"/><rect x="63.75" y="63.28" width="21.35" height="21.19" fill="#4c76c6"/><rect x="85.00" y="63.28" width="21.35" height="21.19" fill="#4693d9"/><rect x="106.25" y="63.28" width="21.35" height="21.19" fill="#40b0ec"/><rect x="0.00" y="84.37" width="21.35" height="21.19" fill="#302892"/><rect x="21.25" y="84.37" width="21.35" height="21.19" fill="#263ea3"/><rect x="42.50" y="84.37" width="21.35" height="21.19" fill="#1d54b4"/><rect x="63.75" y="84.37" width="21.35" height="21.19" fill="#136ac4"/><rect x="85.00" y="84.37" width="21.35" height="21.19" fill="#0a80d5"/><rect x="106.25" y="84.37" width="21.35" height="21.19" fill="#0096e6"/><rect x="0.00" y="105.46" width="21.35" height="21.19" fill="#e60078"/><rect x="21.25" y="105.46" width="21.35" height="21.19" fill="#eb3287"/><rect x="42.50" y="105.46" width="21.35" height="21.19" fill="#f06496"/><rect x="63.75" y="105.46" width="21.35" height="21.19" fill="#f596a5"/><rect x="85.00" y="105.46" width="21.35" height="21.19" fill="#fac8b4"/><rect x="106.25" y="105.46" width="21.35" height="21.19" fill="#fffac3"/><rect x="0.00" y="126.55" width="21.35" height="21.19" fill="#b80978"/><rect x="21.25" y="126.55" width="21.35" height="21.19" fill="#ba3588"/><rect x="42.50" y="126.55" width="21.35" height="21.19" fill="#bb6097"/><rect x="63.75" y="126.55" width="21.35" height="21.19" fill="#bd8ca6"/><rect x="85.00" y="126.55" width="21.35" height="21.19" fill="#beb8b5"/><rect x="106.25" y="126.55" width="21.35" height="21.19" fill="#bfe4c4"/><rect x="0.00" y="147.64" width="21.35" height="21.19" fill="#8b1279"/><rect x="21.25" y="147.64" width="21.35" height="21.19" fill="#893788"/><rect x="42.50" y="147.64" width="21.35" height="21.19" fill="#865d97"/><rect x="63.75" y="147.64" width="21.35" height="21.19" fill="#8482a6"/><rect x="85.00" y="147.64" width="21.35" height="21.19" fill="#82a8b5"/><rect x="106.25" y="147.64" width="21.35" height="21.19" fill="#80cdc4"/><rect x="0.00" y="168.74" width="21.35" height="21.19" fill="#5e1b7a"/><rect x="21.25" y="168.74" width="21.35" height="21.19" fill="#583a89"/><rect x="42.50" y="168.74" width="21.35" height="21.19" fill="#525998"/><rect x="63.75" y="168.74" width="21.35" height="21.19" fill="#4c78a7"/><rect x="85.00" y="168.74" width="21.35" height="21.19" fill="#4697b6"/><rect x="106.25" y="168.74" width="21.35" height="21.19" fill="#40b6c5"/><rect x="0.00" y="189.83" width="21.35" height="21.19" fill="#30247a"/><rect x="21.25" y="189.83" width="21.35" height="21.19" fill="#263d89"/><rect x="42.50" y="189.83" width="21.35" height="21.19" fill="#1d5698"/><rect x="63.75" y="189.83" width="21.35" height="21.19" fill="#136ea8"/><rect x="85.00" y="189.83" width="21.35" height="21.19" fill="#0a87b7"/><rect x="106.25" y="189.83" width="21.35" height="21.19" fill="#00a0c6"/><rect x="0.00" y="210.92" width="21.35" height="21.19" fill="#e4005c"/><rect x="21.25" y="210.92" width="21.35" height="21.19" fill="#e93166"/><rect x="42.50" y="210.92" width="21.35" height="21.19" fill="#ef626f"/><rect x="63.75" y="210.92" width="21.35" height="21.19" fill="#f49379"/><rect x="85.00" y="210.92" width="21.35" height="21.19" fill="#fac482"/><rect x="106.25" y="210.92" width="21.35" height="21.19" fill="#fff58c"/><rect x="0.00" y="232.01" width="21.35" height="21.19" fill="#b60a60"/><rect x="21.25" y="232.01" width="21.35" height="21.19" fill="#b8356a"/><rect x="42.50" y="232.01" width="21.35" height="21.19" fill="#ba6073"/><rect x="63.75" y="232.01" width="21.35" height="21.19" fill="#bc8a7d"/><rect x="85.00" y="232.01" width="21.35" height="21.19" fill="#bdb586"/><rect x="106.25" y="232.01" width="21.35" height="21.19" fill="#bfe090"/><rect x="0.00" y="253.10" width="21.35" height="21.19" fill="#881464"/><rect x="21.25" y="253.10" width="21.35" height="21.19" fill="#87386e"/><rect x="42.50" y="253.10" width="21.35" height="21.19" fill="#855d77"/><rect x="63.75" y="253.10" width="21.35" height="21.19" fill="#838280"/><rect x="85.00" y="253.10" width="21.35" height="21.19" fill="#81a68a"/><rect x="106.25" y="253.10" width="21.35" height="21.19" fill="#80ca94"/><rect x="0.00" y="274.20" width="21.35" height="21.19" fill="#5b1e68"/><rect x="21.25" y="274.20" width="21.35" height="21.19" fill="#553c71"/><rect x="42.50" y="274.20" width="21.35" height="21.19" fill="#505a7b"/><rect x="63.75" y="274.20" width="21.35" height="21.19" fill="#4b7984"/><rect x="85.00" y="274.20" width="21.35" height="21.19" fill="#45978e"/><rect x="106.25" y="274.20" width="21.35" height="21.19" fill="#40b597"/><rect x="0.00" y="295.29" width="21.35" height="21.19" fill="#2d286c"/><rect x="21.25" y="295.29" width="21.35" height="21.19" fill="#244075"/><rect x="42.50" y="295.29" width="21.35" height="21.19" fill="#1b587f"/><rect x="63.75" y="295.29" width="21.35" height="21.19" fill="#127088"/><rect x="85.00" y="295.29" width="21.35" height="21.19" fill="#098892"/><rect x="106.25" y="295.29" width="21.35" height="21.19" fill="#00a09b"/><rect x="0.00" y="316.38" width="21.35" height="21.19" fill="#e40048"/><rect x="21.25" y="316.38" width="21.35" height="21.19" fill="#e9304e"/><rect x="42.50" y="316.38" width="21.35" height="21.19" fill="#ef6153"/><rect x="63.75" y="316.38" width="21.35" height="21.19" fill="#f49159"/><rect x="85.00" y="316.38" width="21.35" height="21.19" fill="#fac25e"/><rect x="106.25" y="316.38" width="21.35" height="21.19" fill="#fff264"/><rect x="0.00" y="337.47" width="21.35" height="21.19" fill="#b60b4b"/><rect x="21.25" y="337.47" width="21.35" height="21.19" fill="#b83551"/><rect x="42.50" y="337.47" width="21.35" height="21.19" fill="#ba5f57"/><rect x="63.75" y="337.47" width="21.35" height="21.19" fill="#bc895d"/><rect x="85.00" y="337.47" width="21.35" height="21.19" fill="#bdb363"/><rect x="106.25" y="337.47" width="21.35" height="21.19" fill="#bfde6a"/><rect x="0.00" y="358.56" width="21.35" height="21.19" fill="#88164e"/><rect x="21.25" y="358.56" width="21.35" height="21.19" fill="#873a55"/><rect x="42.50" y="358.56" width="21.35" height="21.19" fill="#855e5c"/><rect x="63.75" y="358.56" width="21.35" height="21.19" fill="#838262"/><rect x="85.00" y="358.56" width="21.35" height="21.19" fill="#81a568"/><rect x="106.25" y="358.56" width="21.35" height="21.19" fill="#80c96f"/><rect x="0.00" y="379.66" width="21.35" height="21.19" fill="#5b2252"/><rect x="21.25" y="379.66" width="21.35" height="21.19" fill="#553f59"/><rect x="42.50" y="379.66" width="21.35" height="21.19" fill="#505c60"/><rect x="63.75" y="379.66" width="21.35" height="21.19" fill="#4b7a67"/><rect x="85.00" y="379.66" width="21.35" height="21.19" fill="#45976e"/><rect x="106.25" y="379.66" width="21.35" height="21.19" fill="#40b474"/><rect x="0.00" y="400.75" width="21.35" height="21.19" fill="#2d2d55"/><rect x="21.25" y="400.75" width="21.35" height="21.19" fill="#24445c"/><rect x="42.50" y="400.75" width="21.35" height="21.19" fill="#1b5b64"/><rect x="63.75" y="400.75" width="21.35" height="21.19" fill="#12726b"/><rect x="85.00" y="400.75" width="21.35" height="21.19" fill="#098973"/><rect x="106.25" y="400.75" width="21.35" height="21.19" fill="#00a07a"/><rect x="0.00" y="421.84" width="21.35" height="21.19" fill="#e2063a"/><rect x="21.25" y="421.84" width="21.35" height="21.19" fill="#e8352e"/><rect x="42.50" y="421.84" width="21.35" height="21.19" fill="#ee6423"/><rect x="63.75" y="421.84" width="21.35" height="21.19" fill="#f39417"/><rect x="85.00" y="421.84" width="21.35" height="21.19" fill="#f9c30c"/><rect x="106.25" y="421.84" width="21.35" height="21.19" fill="#fff200"/><rect x="0.00" y="442.93" width="21.35" height="21.19" fill="#b51039"/><rect x="21.25" y="442.93" width="21.35" height="21.19" fill="#b73932"/><rect x="42.50" y="442.93" width="21.35" height="21.19" fill="#b9632a"/><rect x="63.75" y="442.93" width="21.35" height="21.19" fill="#bb8c23"/><rect x="85.00" y="442.93" width="21.35" height="21.19" fill="#bdb61b"/><rect x="106.25" y="442.93" width="21.35" height="21.19" fill="#bfdf14"/><rect x="0.00" y="464.02" width="21.35" height="21.19" fill="#881a38"/><rect x="21.25" y="464.02" width="21.35" height="21.19" fill="#863d35"/><rect x="42.50" y="464.02" width="21.35" height="21.19" fill="#846132"/><rect x="63.75" y="464.02" width="21.35" height="21.19" fill="#83852f"/><rect x="85.00" y="464.02" width="21.35" height="21.19" fill="#81a82b"/><rect x="106.25" y="464.02" width="21.35" height="21.19" fill="#80cc28"/><rect x="0.00" y="485.12" width="21.35" height="21.19" fill="#5a2338"/><rect x="21.25" y="485.12" width="21.35" height="21.19" fill="#554139"/><rect x="42.50" y="485.12" width="21.35" height="21.19" fill="#505f39"/><rect x="63.75" y="485.12" width="21.35" height="21.19" fill="#4a7d3a"/><rect x="85.00" y="485.12" width="21.35" height="21.19" fill="#459b3b"/><rect x="106.25" y="485.12" width="21.35" height="21.19" fill="#40b93c"/><rect x="0.00" y="506.21" width="21.35" height="21.19" fill="#2d2d37"/><rect x="21.25" y="506.21" width="21.35" height="21.19" fill="#24453c"/><rect x="42.50" y="506.21" width="21.35" height="21.19" fill="#1b5d41"/><rect x="63.75" y="506.21" width="21.35" height="21.19" fill="#127646"/><rect x="85.00" y="506.21" width="21.35" height="21.19" fill="#098e4b"/><rect x="106.25" y="506.21" width="21.35" height="21.19" fill="#00a650"/><path d="M0.60 0V527.3" stroke="#0c0418" stroke-width="1.3" stroke-opacity=".92"/><path d="M21.25 0V527.3" stroke="#0c0418" stroke-width="1.3" stroke-opacity=".92"/><path d="M42.50 0V527.3" stroke="#0c0418" stroke-width="1.3" stroke-opacity=".92"/><path d="M63.75 0V527.3" stroke="#0c0418" stroke-width="1.3" stroke-opacity=".92"/><path d="M85.00 0V527.3" stroke="#0c0418" stroke-width="1.3" stroke-opacity=".92"/><path d="M106.25 0V527.3" stroke="#0c0418" stroke-width="1.3" stroke-opacity=".92"/><path d="M126.90 0V527.3" stroke="#0c0418" stroke-width="1.3" stroke-opacity=".92"/><path d="M0 0.60H127.5" stroke="#0c0418" stroke-width="1.3" stroke-opacity=".92"/><path d="M0 21.09H127.5" stroke="#0c0418" stroke-width="1.3" stroke-opacity=".92"/><path d="M0 42.18H127.5" stroke="#0c0418" stroke-width="1.3" stroke-opacity=".92"/><path d="M0 63.28H127.5" stroke="#0c0418" stroke-width="1.3" stroke-opacity=".92"/><path d="M0 84.37H127.5" stroke="#0c0418" stroke-width="1.3" stroke-opacity=".92"/><path d="M0 105.46H127.5" stroke="#0c0418" stroke-width="1.3" stroke-opacity=".92"/><path d="M0 126.55H127.5" stroke="#0c0418" stroke-width="1.3" stroke-opacity=".92"/><path d="M0 147.64H127.5" stroke="#0c0418" stroke-width="1.3" stroke-opacity=".92"/><path d="M0 168.74H127.5" stroke="#0c0418" stroke-width="1.3" stroke-opacity=".92"/><path d="M0 189.83H127.5" stroke="#0c0418" stroke-width="1.3" stroke-opacity=".92"/><path d="M0 210.92H127.5" stroke="#0c0418" stroke-width="1.3" stroke-opacity=".92"/><path d="M0 232.01H127.5" stroke="#0c0418" stroke-width="1.3" stroke-opacity=".92"/><path d="M0 253.10H127.5" stroke="#0c0418" stroke-width="1.3" stroke-opacity=".92"/><path d="M0 274.20H127.5" stroke="#0c0418" stroke-width="1.3" stroke-opacity=".92"/><path d="M0 295.29H127.5" stroke="#0c0418" stroke-width="1.3" stroke-opacity=".92"/><path d="M0 316.38H127.5" stroke="#0c0418" stroke-width="1.3" stroke-opacity=".92"/><path d="M0 337.47H127.5" stroke="#0c0418" stroke-width="1.3" stroke-opacity=".92"/><path d="M0 358.56H127.5" stroke="#0c0418" stroke-width="1.3" stroke-opacity=".92"/><path d="M0 379.66H127.5" stroke="#0c0418" stroke-width="1.3" stroke-opacity=".92"/><path d="M0 400.75H127.5" stroke="#0c0418" stroke-width="1.3" stroke-opacity=".92"/><path d="M0 421.84H127.5" stroke="#0c0418" stroke-width="1.3" stroke-opacity=".92"/><path d="M0 442.93H127.5" stroke="#0c0418" stroke-width="1.3" stroke-opacity=".92"/><path d="M0 464.02H127.5" stroke="#0c0418" stroke-width="1.3" stroke-opacity=".92"/><path d="M0 485.12H127.5" stroke="#0c0418" stroke-width="1.3" stroke-opacity=".92"/><path d="M0 506.21H127.5" stroke="#0c0418" stroke-width="1.3" stroke-opacity=".92"/><path d="M0 526.70H127.5" stroke="#0c0418" stroke-width="1.3" stroke-opacity=".92"/><rect x="44.70" y="44.38" width="16.85" height="16.69" fill="#8b55ae" stroke="#fff" stroke-width="1.2"/><rect x="45.80" y="45.48" width="14.65" height="14.49" fill="none" stroke="#222" stroke-width=".8"/></svg>
<div style="left:1282.5px;top:100.6px;width:295px;height:637.6px;background:#d4d0c8;box-shadow:inset 1px 1px #e8e6e0,inset 2px 2px #fff,inset -1px -1px #404040,inset -2px -2px #808080;"></div>
<div style="left:1288px;top:105.5px;width:281.5px;height:27.8px;background:linear-gradient(90deg,#0a246a 0%,#3b5a9c 30%,#7a9bd0 62%,#a6caf0 100%);"></div>
<span style="left:1290.5px;top:110.9px;font-size:17.6px;line-height:22px;font-family:'Liberation Sans',sans-serif;color:#fff;letter-spacing:0.27px;-webkit-text-stroke:0.55px #fff;">Elements</span>
<div style="left:1553px;top:108px;width:15.5px;height:22.8px;background:#d4d0c8;box-shadow:inset -1px -1px #404040,inset 1px 1px #fff,inset -2px -2px #808080,inset 2px 2px #d4d0c8;"></div>
<svg style="left:1556.25px;top:114.9px;" width="9" height="9" viewBox="0 0 9 9"><path d="M1 1L8 8M8 1L1 8" stroke="#000" stroke-width="2" fill="none"/></svg>
<div style="left:1291.5px;top:141px;width:277px;height:376.5px;background:#fff;box-shadow:inset 1px 1px #808080,inset -1px -1px #fff,inset 2px 2px #404040,inset -2px -2px #d4d0c8;"></div>
<div style="left:1323.8px;top:156px;width:167.6px;height:20.5px;background:#d0d0d0;"></div>
<svg style="left:1305px;top:159.7px;" width="19" height="12.6" viewBox="0 0 19 12.6"><rect x=".8" y=".8" width="11" height="11" fill="#fff" stroke="#111" stroke-width="1.4"/><path d="M3 6.3H9.6" stroke="#111" stroke-width="1.4"/><path d="M18 2L14 6.3L18 10.6Z" fill="#000"/></svg>
<div style="left:1327.5px;top:157px;width:18px;height:18px;background:#fff;border:1px solid #9a9a9a;box-sizing:border-box;"></div>
<svg style="left:1329.5px;top:161px;" width="14" height="10" viewBox="0 0 14 10"><path d="M.6 5.4C3.5 .8 10.5 .8 13.4 5.4C10.5 9.2 3.5 9.2 .6 5.4Z" fill="#fff" stroke="#111" stroke-width="1.5"/><circle cx="7.3" cy="5.2" r="2.7" fill="#111"/><path d="M.6 5.2C3.5 1 10.5 1 13.4 5.2" fill="none" stroke="#111" stroke-width="2"/></svg>
<svg style="left:1351.5px;top:159.5px;" width="14" height="13" viewBox="0 0 14 13"><rect x=".8" y=".8" width="12" height="11.4" fill="#fff" stroke="#111" stroke-width="1.4"/></svg>
<span style="left:1368.6px;top:154.7px;font-size:15px;line-height:22px;font-family:'DejaVu Sans',sans-serif;color:#000;letter-spacing:0.09px;">Panel 1</span>
<svg style="left:1324px;top:181px;" width="19" height="12.6" viewBox="0 0 19 12.6"><rect x=".8" y=".8" width="11" height="11" fill="#fff" stroke="#111" stroke-width="1.4"/><path d="M3 6.3H9.6" stroke="#111" stroke-width="1.4"/><path d="M18 2L14 6.3L18 10.6Z" fill="#000"/></svg>
<div style="left:1346.5px;top:178.3px;width:18px;height:18px;background:#fff;border:1px solid #9a9a9a;box-sizing:border-box;"></div>
<svg style="left:1348.5px;top:182.3px;" width="14" height="10" viewBox="0 0 14 10"><path d="M.6 5.4C3.5 .8 10.5 .8 13.4 5.4C10.5 9.2 3.5 9.2 .6 5.4Z" fill="#fff" stroke="#111" stroke-width="1.5"/><circle cx="7.3" cy="5.2" r="2.7" fill="#111"/><path d="M.6 5.2C3.5 1 10.5 1 13.4 5.2" fill="none" stroke="#111" stroke-width="2"/></svg>
<svg style="left:1370.7px;top:179.8px;" width="14" height="15" viewBox="0 0 14 15"><path d="M.9 10L7 4.6L13.1 10" fill="none" stroke="#111" stroke-width="1.4" stroke-linecap="round"/><path d="M6 9.6L4.9 14M8 9.6L9.1 14" fill="none" stroke="#111" stroke-width="1.5" stroke-linecap="round"/><ellipse cx="7" cy="7.4" rx="2" ry="2.5" fill="#fff" stroke="#111" stroke-width="1.3"/><circle cx="7" cy="2.6" r="1.9" fill="#fff" stroke="#111" stroke-width="1.3"/></svg>
<span style="left:1387px;top:176.0px;font-size:15px;line-height:22px;font-family:'DejaVu Sans',sans-serif;color:#000;letter-spacing:0.25px;">Poses</span>
<div style="left:1365.4px;top:199.3px;width:18px;height:18px;background:#fff;border:1px solid #9a9a9a;box-sizing:border-box;"></div>
<svg style="left:1367.4px;top:203.3px;" width="14" height="10" viewBox="0 0 14 10"><path d="M.6 5.4C3.5 .8 10.5 .8 13.4 5.4C10.5 9.2 3.5 9.2 .6 5.4Z" fill="#fff" stroke="#111" stroke-width="1.5"/><circle cx="7.3" cy="5.2" r="2.7" fill="#111"/><path d="M.6 5.2C3.5 1 10.5 1 13.4 5.2" fill="none" stroke="#111" stroke-width="2"/></svg>
<svg style="left:1389.7px;top:200.8px;" width="14" height="15" viewBox="0 0 14 15"><path d="M.9 10L7 4.6L13.1 10" fill="none" stroke="#111" stroke-width="1.4" stroke-linecap="round"/><path d="M6 9.6L4.9 14M8 9.6L9.1 14" fill="none" stroke="#111" stroke-width="1.5" stroke-linecap="round"/><ellipse cx="7" cy="7.4" rx="2" ry="2.5" fill="#fff" stroke="#111" stroke-width="1.3"/><circle cx="7" cy="2.6" r="1.9" fill="#fff" stroke="#111" stroke-width="1.3"/></svg>
<span style="left:1406px;top:197.0px;font-size:15px;line-height:22px;font-family:'DejaVu Sans',sans-serif;color:#000;letter-spacing:0.18px;">man 1</span>
<svg style="left:1324px;top:223px;" width="19" height="12.6" viewBox="0 0 19 12.6"><rect x=".8" y=".8" width="11" height="11" fill="#fff" stroke="#111" stroke-width="1.4"/><path d="M3 6.3H9.6" stroke="#111" stroke-width="1.4"/><path d="M6.3 3V9.6" stroke="#111" stroke-width="1.4"/><path d="M14 2L18 6.3L14 10.6Z" fill="#000"/></svg>
<div style="left:1346.5px;top:220.3px;width:18px;height:18px;background:#fff;border:1px solid #9a9a9a;box-sizing:border-box;"></div>
<svg style="left:1348.5px;top:224.3px;" width="14" height="10" viewBox="0 0 14 10"><path d="M.6 5.4C3.5 .8 10.5 .8 13.4 5.4C10.5 9.2 3.5 9.2 .6 5.4Z" fill="#fff" stroke="#111" stroke-width="1.5"/><circle cx="7.3" cy="5.2" r="2.7" fill="#111"/><path d="M.6 5.2C3.5 1 10.5 1 13.4 5.2" fill="none" stroke="#111" stroke-width="2"/></svg>
<svg style="left:1370.5px;top:222.8px;" width="14" height="13" viewBox="0 0 14 13"><rect x=".8" y=".8" width="12" height="11.4" fill="#fff" stroke="#111" stroke-width="1.4"/></svg>
<span style="left:1387px;top:218.0px;font-size:15px;line-height:22px;font-family:'DejaVu Sans',sans-serif;color:#000;letter-spacing:0.17px;">Frame</span>
<svg style="left:1324px;top:244px;" width="19" height="12.6" viewBox="0 0 19 12.6"><rect x=".8" y=".8" width="11" height="11" fill="#fff" stroke="#111" stroke-width="1.4"/><path d="M3 6.3H9.6" stroke="#111" stroke-width="1.4"/><path d="M18 2L14 6.3L18 10.6Z" fill="#000"/></svg>
<div style="left:1346.5px;top:241.3px;width:18px;height:18px;background:#fff;border:1px solid #9a9a9a;box-sizing:border-box;"></div>
<svg style="left:1348.5px;top:245.3px;" width="14" height="10" viewBox="0 0 14 10"><path d="M.6 5.4C3.5 .8 10.5 .8 13.4 5.4C10.5 9.2 3.5 9.2 .6 5.4Z" fill="#fff" stroke="#111" stroke-width="1.5"/><circle cx="7.3" cy="5.2" r="2.7" fill="#111"/><path d="M.6 5.2C3.5 1 10.5 1 13.4 5.2" fill="none" stroke="#111" stroke-width="2"/></svg>
<svg style="left:1370.5px;top:243.8px;" width="14" height="13" viewBox="0 0 14 13"><rect x=".8" y=".8" width="12" height="11.4" fill="#fff" stroke="#111" stroke-width="1.4"/><path d="M3.5 9.5L9.5 3.5" stroke="#111" stroke-width="2.4"/><path d="M3 10.2L4.8 9.8L3.4 8.4Z" fill="#111"/></svg>
<span style="left:1387px;top:239.0px;font-size:15px;line-height:22px;font-family:'DejaVu Sans',sans-serif;color:#000;letter-spacing:0.17px;">Layers Group 1</span>
<div style="left:1361.3px;top:261.2px;width:167.7px;height:20.8px;background:#000080;"></div>
<div style="left:1365.4px;top:262.6px;width:18px;height:18px;background:#fff;border:1px solid #9a9a9a;box-sizing:border-box;"></div>
<svg style="left:1367.4px;top:266.6px;" width="14" height="10" viewBox="0 0 14 10"><path d="M.6 5.4C3.5 .8 10.5 .8 13.4 5.4C10.5 9.2 3.5 9.2 .6 5.4Z" fill="#fff" stroke="#111" stroke-width="1.5"/><circle cx="7.3" cy="5.2" r="2.7" fill="#111"/><path d="M.6 5.2C3.5 1 10.5 1 13.4 5.2" fill="none" stroke="#111" stroke-width="2"/></svg>
<svg style="left:1390px;top:265.6px;" width="12" height="12" viewBox="0 0 12 12"><rect x=".7" y=".7" width="10.6" height="10.6" fill="#fff" stroke="#111" stroke-width="1.4"/><path d="M2.2 2.2L9.8 9.8M9.8 2.2L2.2 9.8" stroke="#111" stroke-width="2.2"/><rect x="1.6" y="1.6" width="3.2" height="2.6" fill="#111"/></svg>
<span style="left:1406px;top:260.3px;font-size:15px;line-height:22px;font-family:'DejaVu Sans',sans-serif;color:#fff;transform:scaleX(0.9976);transform-origin:0 50%;">Layer 1</span>
<svg style="left:1295.6px;top:523.6px;" width="16" height="22" viewBox="0 0 16 22"><path d="M8 1.4L14.6 10.4H10.9V20.6H5.1V10.4H1.4Z" fill="#fff" stroke="#111" stroke-width="1.9" stroke-linejoin="round"/></svg>
<svg style="left:1323.8px;top:525.4px;" width="16" height="21" viewBox="0 0 16 21"><path d="M8 19.6L14.6 10.6H10.9V1.4H5.1V10.6H1.4Z" fill="#fff" stroke="#111" stroke-width="1.9" stroke-linejoin="round"/></svg>
<svg style="left:1356px;top:524px;" width="21" height="23" viewBox="0 0 21 23"><rect x="7" y="1.2" width="12.7" height="18" fill="#f4f4f4" stroke="#111" stroke-width="1.7"/><rect x="1" y="4.2" width="14.5" height="17.4" fill="#ececec" stroke="#111" stroke-width="1.7"/><path d="M4.5 9.6H10V6.6L16.4 11.2L10 15.8V12.8H4.5Z" fill="#fff" stroke="#111" stroke-width="1.5" stroke-linejoin="round"/></svg>
<svg style="left:1383px;top:524px;" width="21" height="23" viewBox="0 0 21 23"><rect x="6.5" y="1.2" width="12.7" height="18" fill="#f4f4f4" stroke="#111" stroke-width="1.7"/><rect x="1" y="4.2" width="14" height="17.4" fill="#ececec" stroke="#111" stroke-width="1.7"/><path d="M5.2 5.5L11.6 16M12 5.5L5.6 16" stroke="#111" stroke-width="1.7" fill="none"/><circle cx="4.9" cy="17" r="1.9" fill="#fff" stroke="#111" stroke-width="1.3"/><circle cx="12.3" cy="17" r="1.9" fill="#fff" stroke="#111" stroke-width="1.3"/></svg>
<svg style="left:1412px;top:524px;" width="21" height="23" viewBox="0 0 21 23"><rect x="7" y="1.2" width="12.7" height="18" fill="#dad7d0" stroke="#b9b6ae" stroke-width="1.4"/><rect x="1" y="4.2" width="14" height="17.4" fill="#d8d5ce" stroke="#b9b6ae" stroke-width="1.4"/><path d="M5 10H10V7L16 11.5L10 16V13H5Z" fill="#a9a7a0"/></svg>
<svg style="left:1444px;top:523px;" width="24" height="23.5" viewBox="0 0 24 23.5"><rect x="4.3" y="12.5" width="15.4" height="9.8" fill="#fff" stroke="#111" stroke-width="1.7"/><rect x="4.3" y="1" width="14.4" height="8" fill="#fff" stroke="#111" stroke-width="1.6"/><rect x="1" y="7.2" width="22" height="5.2" rx="1" fill="#111"/><rect x="4.3" y="11.8" width="15.4" height="7.6" fill="#fff" stroke="#111" stroke-width="1.5"/><path d="M7.5 13.4H16.5L12 17.8Z" fill="#111"/></svg>
<svg style="left:1540px;top:525.3px;" width="16.5" height="20.5" viewBox="0 0 16.5 20.5"><path d="M2.6 5.5H13.9L13.1 18.9H3.4Z" fill="#fff" stroke="#111" stroke-width="1.7"/><path d="M1 4.8H15.5" stroke="#111" stroke-width="2.4"/><path d="M5.6 3.6V1.5H10.9V3.6" fill="none" stroke="#111" stroke-width="1.6"/><path d="M5.7 7.5V16.8M8.25 7.5V16.8M10.8 7.5V16.8" stroke="#111" stroke-width="1.3"/></svg>
<div style="left:1299.7px;top:556px;width:194.5px;height:27.6px;background:#fff;box-shadow:inset 1px 1px #808080,inset -1px -1px #fff,inset 2px 2px #404040,inset -2px -2px #d4d0c8;"></div>
<div style="left:1471.2px;top:558px;width:22px;height:24.6px;background:#d4d0c8;box-shadow:inset -1px -1px #404040,inset 1px 1px #fff,inset -2px -2px #808080,inset 2px 2px #d4d0c8;"></div>
<svg style="left:1477px;top:567.8px;" width="10.4" height="5.6" viewBox="0 0 10.4 5.6"><path d="M0 0H10.4L5.2 5.6Z" fill="#000"/></svg>
<span style="left:1320.4px;top:560.5px;font-size:17.2px;line-height:22px;font-family:'Liberation Sans',sans-serif;color:#000;transform:scaleX(0.9204);transform-origin:0 50%;">Layer</span>
<svg style="left:1303px;top:563.5px;" width="12" height="12" viewBox="0 0 12 12"><rect x=".7" y=".7" width="10.6" height="10.6" fill="#fff" stroke="#111" stroke-width="1.4"/><path d="M2.2 2.2L9.8 9.8M9.8 2.2L2.2 9.8" stroke="#111" stroke-width="2.2"/><rect x="1.6" y="1.6" width="3.2" height="2.6" fill="#111"/></svg>
<div style="left:1501px;top:555.3px;width:59.5px;height:25.4px;background:#d4d0c8;box-shadow:inset -1px -1px #404040,inset 1px 1px #fff,inset -2px -2px #808080,inset 2px 2px #d4d0c8;"></div>
<span style="left:1517px;top:556.1px;font-size:17px;line-height:22px;font-family:'Liberation Sans',sans-serif;color:#000;transform:scaleX(0.9091);transform-origin:0 50%;">Add</span>
<div style="left:1291.6px;top:603px;width:277px;height:129px;border:1px solid #808080;box-sizing:border-box;box-shadow:inset 1px 1px #fff,1px 1px #fff;"></div>
<div style="left:1298.2px;top:600px;width:44.7px;height:8px;background:#d4d0c8;"></div>
<span style="left:1300.7px;top:592.5px;font-size:17.2px;line-height:22px;font-family:'Liberation Sans',sans-serif;color:#000;transform:scaleX(0.9227);transform-origin:0 50%;">Layer</span>
<div style="left:1302.4px;top:618.4px;width:161.6px;height:22.8px;background:#fff;box-shadow:inset 1px 1px #808080,inset -1px -1px #fff,inset 2px 2px #404040,inset -2px -2px #d4d0c8;"></div>
<span style="left:1308.6px;top:619.8px;font-size:15px;line-height:22px;font-family:'DejaVu Sans',sans-serif;color:#000;transform:scaleX(0.9709);transform-origin:0 50%;">Layer 1</span>
<svg style="left:1484px;top:620px;" width="24" height="23" viewBox="0 0 24 23"><rect x="3" y="4.5" width="12.5" height="12" fill="#e4e4e4" stroke="#111" stroke-width="1.4"/><path d="M1.5 20.5Q1.5 14.5 6 14.5Q10.5 14.5 10.5 20.5Z" fill="#bbb" stroke="#111" stroke-width="1.4"/><rect x="3.8" y="11" width="4.4" height="3.5" fill="#999" stroke="#111" stroke-width="1"/><path d="M11 5L22.5 17" stroke="#111" stroke-width="2.2"/><path d="M9 1V5M6.5 3H11.5M7 1.2L11 4.8M11 1.2L7 4.8" stroke="#333" stroke-width=".9"/></svg>
<svg style="left:1512.3px;top:621px;" width="25" height="23" viewBox="0 0 25 23"><rect x="1" y="1.5" width="13" height="13.5" fill="#e6e6e6" stroke="#111" stroke-width="1.4"/><rect x="2.5" y="3" width="5" height="5" fill="#c8c8c8"/><path d="M11 8H19V13H23.5L15 21.5L6.5 13H11Z" fill="#fff" stroke="#111" stroke-width="1.5" stroke-linejoin="round"/></svg>
<svg style="left:1540.3px;top:621px;" width="23" height="23" viewBox="0 0 23 23"><rect x="1" y="1.5" width="13" height="13.5" fill="#e6e6e6" stroke="#111" stroke-width="1.4"/><rect x="2.5" y="3" width="5" height="5" fill="#c8c8c8"/><rect x="8.5" y="12" width="13" height="9.5" rx="2" fill="#d8d8d8" stroke="#111" stroke-width="1.7"/><path d="M11.5 12V9.5Q15 5.5 18.5 9.5V12" fill="none" stroke="#111" stroke-width="1.7"/><rect x="14" y="15" width="2" height="3.5" fill="#111"/></svg>
<span style="left:1311.5px;top:654.1px;font-size:17.2px;line-height:22px;font-family:'Liberation Sans',sans-serif;color:#000;transform:scaleX(0.9510);transform-origin:0 50%;">Opacity:</span>
<div style="left:1385px;top:661.5px;width:99.8px;height:3px;background:#808080;box-shadow:0 1px #fff,inset 0 1px #404040;"></div>
<svg style="left:1476px;top:657px;" width="11" height="20" viewBox="0 0 11 20"><path d="M1 0.5H9V14L5.0 19L1 14Z" fill="#d4d0c8" stroke="#404040" stroke-width="1"/><path d="M1.5 14V1H8" fill="none" stroke="#fff" stroke-width="1"/></svg>
<div style="left:1388.5px;top:676.5px;width:1.3px;height:3.5px;background:#222;"></div>
<div style="left:1481px;top:676.5px;width:1.3px;height:3.5px;background:#222;"></div>
<div style="left:1493px;top:656px;width:44.8px;height:21.5px;background:#fff;box-shadow:inset 1px 1px #808080,inset -1px -1px #fff,inset 2px 2px #404040,inset -2px -2px #d4d0c8;"></div>
<span style="left:1501px;top:656.8px;font-size:16.6px;line-height:22px;font-family:'Liberation Sans',sans-serif;color:#000;transform:scaleX(0.9929);transform-origin:0 50%;">100</span>
<div style="left:1540px;top:656px;width:12.8px;height:10.75px;background:#d4d0c8;box-shadow:inset -1px -1px #404040,inset 1px 1px #fff,inset -2px -2px #808080,inset 2px 2px #d4d0c8;"></div>
<div style="left:1540px;top:666.75px;width:12.8px;height:10.75px;background:#d4d0c8;box-shadow:inset -1px -1px #404040,inset 1px 1px #fff,inset -2px -2px #808080,inset 2px 2px #d4d0c8;"></div>
<svg style="left:1544.2px;top:660.175px;" width="4.4" height="2.6" viewBox="0 0 4.4 2.6"><path d="M0 2.6H4.4L2.2 0Z" fill="#000"/></svg>
<svg style="left:1544.2px;top:670.725px;" width="4.4" height="2.6" viewBox="0 0 4.4 2.6"><path d="M0 0H4.4L2.2 2.6Z" fill="#000"/></svg>
<span style="left:1328px;top:689.0px;font-size:17.2px;line-height:22px;font-family:'Liberation Sans',sans-serif;color:#000;transform:scaleX(0.9141);transform-origin:0 50%;">Mode:</span>
<div style="left:1378.3px;top:690.8px;width:172.7px;height:27.4px;background:#fff;box-shadow:inset 1px 1px #808080,inset -1px -1px #fff,inset 2px 2px #404040,inset -2px -2px #d4d0c8;"></div>
<div style="left:1528.5px;top:692.8px;width:21.5px;height:24.4px;background:#d4d0c8;box-shadow:inset -1px -1px #404040,inset 1px 1px #fff,inset -2px -2px #808080,inset 2px 2px #d4d0c8;"></div>
<svg style="left:1534.05px;top:702.5px;" width="10.4" height="5.6" viewBox="0 0 10.4 5.6"><path d="M0 0H10.4L5.2 5.6Z" fill="#000"/></svg>
<span style="left:1381.3px;top:694.5px;font-size:17.2px;line-height:22px;font-family:'Liberation Sans',sans-serif;color:#000;transform:scaleX(0.9510);transform-origin:0 50%;">normal</span>
<div style="left:1282.5px;top:738.5px;width:294.5px;height:306.5px;background:#d4d0c8;box-shadow:inset 1px 1px #e8e6e0,inset 2px 2px #fff,inset -1px -1px #404040,inset -2px -2px #808080;"></div>
<div style="left:1288.5px;top:744px;width:280.5px;height:27.6px;background:linear-gradient(90deg,#0a246a 0%,#3b5a9c 30%,#7a9bd0 62%,#a6caf0 100%);"></div>
<span style="left:1291px;top:750.2px;font-size:17.6px;line-height:22px;font-family:'Liberation Sans',sans-serif;color:#fff;letter-spacing:0.30px;-webkit-text-stroke:0.55px #fff;">Tools</span>
<div style="left:1554.8px;top:747px;width:14.5px;height:22px;background:#d4d0c8;box-shadow:inset -1px -1px #404040,inset 1px 1px #fff,inset -2px -2px #808080,inset 2px 2px #d4d0c8;"></div>
<svg style="left:1557.55px;top:753.5px;" width="9" height="9" viewBox="0 0 9 9"><path d="M1 1L8 8M8 1L1 8" stroke="#000" stroke-width="2" fill="none"/></svg>
<div style="left:1290.6px;top:781.8px;width:25px;height:25px;background:#fff;border-radius:3.5px;box-shadow:0 0 0 1.6px #7f9bd0,0 0 2px 2px rgba(120,150,210,.45);"></div>
<svg style="left:1288.5px;top:779.5px;" width="28" height="28" viewBox="0 0 28 28"><path d="M24.7 3L10.5 17.6" stroke="#222" stroke-width="3.6" stroke-linecap="round"/><path d="M24.2 3.6L11.5 16.8" stroke="#b8b8b8" stroke-width="1.3"/><path d="M11.8 15.6L13.6 17.6L9 21.5L7.5 20Z" fill="#666" stroke="#222" stroke-width=".8"/><path d="M8.8 20L2.5 24.8L9.6 21.2Z" fill="#1c2c60" stroke="#1c2c60" stroke-width="1.4" stroke-linejoin="round"/></svg>
<svg style="left:1318.6px;top:786.8px;" width="23" height="17" viewBox="0 0 23 17"><path d="M8.8 1.8H21.2V5.2L13.6 15.1L1.2 14.6L1.7 12.4Z" fill="#dcdcdc" stroke="#111" stroke-width="1.6" stroke-linejoin="round"/><path d="M8.8 1.8H21.2L13.8 11.6L1.7 12.4Z" fill="#fff" stroke="#111" stroke-width="1.3" stroke-linejoin="round"/></svg>
<svg style="left:1346px;top:782px;" width="27" height="24" viewBox="0 0 27 24"><defs><linearGradient id="bk" x1="0" x2="1" y1="0" y2="1"><stop offset="0" stop-color="#fff"/><stop offset=".55" stop-color="#cfcfcf"/><stop offset="1" stop-color="#888"/></linearGradient></defs><path d="M13.2 2.2L24.3 13.2L15 22L6 10.6Z" fill="url(#bk)" stroke="#111" stroke-width="1.9" stroke-linejoin="round"/><path d="M6.6 9.6C3.4 8.6 1.4 10.8 1.6 14.5C1.8 17.5 2.2 19 3.6 20.6C4.8 20.2 5 18.5 5 16.5L6.6 10.8Z" fill="#0a0a0a"/><path d="M7 10.4L13.2 2.2" stroke="#111" stroke-width="2.2"/><path d="M13.5 5L20.5 12M11 8.5L17.8 16" stroke="#eee" stroke-width="1" stroke-opacity=".7"/></svg>
<svg style="left:1376.8px;top:783px;" width="20" height="21" viewBox="0 0 20 21"><path d="M3 19.2L2 17.4L11 8.2L13.4 10.6L4.8 19.4Z" fill="#fff" stroke="#222" stroke-width="1.6" stroke-linejoin="round"/><path d="M9.6 6.4L15.4 12" stroke="#222" stroke-width="2.6"/><path d="M11 5L16.6 10.6" stroke="#888" stroke-width="1"/><path d="M13 7.4L16 3.4Q17.4 1.6 18.6 3Q19.8 4.4 18 5.8L14.4 9Z" fill="#555" stroke="#222" stroke-width="1.3"/></svg>
<svg style="left:1480.5px;top:781.5px;" width="25" height="25" viewBox="0 0 25 25"><path d="M3.5 9C5 3.5 11 .8 16.5 2C22 3.5 24.5 8.5 22 12.5C20 15 17 15 15.5 17.5C14 21 12 24 8 23.5C3.5 22.5 1 18 1.5 14C1.8 12 2.5 10.5 3.5 9Z" fill="#dcd9d2" fill-opacity=".5" stroke="#444" stroke-width="1.5" stroke-dasharray="1.6 1.5"/></svg>
<svg style="left:1509px;top:781px;" width="25" height="26" viewBox="0 0 25 26"><path d="M9 9L22.5 23.5" stroke="#555" stroke-width="3.4" stroke-linecap="round"/><path d="M9.5 9.5L22 23" stroke="#ddd" stroke-width="1"/><path d="M7 1V6M1.5 6.5H6M2.5 2L6 5.5M12 2.5L8.5 6M3 11.5L6 8.5M11 7H13.5" stroke="#111" stroke-width="1.2"/></svg>
<svg style="left:1537.3px;top:782px;" width="25" height="24" viewBox="0 0 25 24"><rect x="3.2" y="3.6" width="13" height="12" fill="#dedbd4" stroke="#222" stroke-width="1.6"/><circle cx="3.2" cy="3.6" r="2.2" fill="#111"/><circle cx="16.2" cy="3.6" r="2.2" fill="#111"/><circle cx="3.2" cy="15.6" r="2.2" fill="#111"/><circle cx="16.2" cy="15.6" r="2.2" fill="#111"/><path d="M19 5V14L24.3 9.5Z M5 18.3H14.6L9.8 23.3Z" fill="#111"/></svg>
<div style="left:1295px;top:820.8px;width:236.5px;height:27.4px;background:#fff;box-shadow:inset 1px 1px #808080,inset -1px -1px #fff,inset 2px 2px #404040,inset -2px -2px #d4d0c8;"></div>
<div style="left:1509px;top:822.8px;width:21.5px;height:24.4px;background:#d4d0c8;box-shadow:inset -1px -1px #404040,inset 1px 1px #fff,inset -2px -2px #808080,inset 2px 2px #d4d0c8;"></div>
<svg style="left:1514.55px;top:832.5px;" width="10.4" height="5.6" viewBox="0 0 10.4 5.6"><path d="M0 0H10.4L5.2 5.6Z" fill="#000"/></svg>
<span style="left:1298px;top:825.7px;font-size:17.2px;line-height:22px;font-family:'Liberation Sans',sans-serif;color:#000;transform:scaleX(0.8567);transform-origin:0 50%;">pencil</span>
<svg style="left:1545.5px;top:823.5px;" width="17" height="22" viewBox="0 0 17 22"><g transform="translate(17,0) scale(-1,1)"><path d="M11.5 4.5C6.5 3 3.5 7 4.5 11" fill="none" stroke="#000" stroke-width="2.4"/><path d="M9.5 .6L14.8 4.8L9.5 9Z" fill="#000"/><path d="M5.5 17C10.5 18.5 13.5 14.5 12.5 10.5" fill="none" stroke="#000" stroke-width="2.4"/><path d="M7.5 12.6L2.2 16.8L7.5 21Z" fill="#000"/></g></svg>
<div style="left:1286px;top:860px;width:288px;height:180px;overflow:hidden;">
<div style="left:6.5px;top:9px;width:276.5px;height:168.6px;border:1px solid #808080;box-sizing:border-box;box-shadow:inset 1px 1px #fff,1px 1px #fff;"></div>
<div style="left:13.5px;top:6px;width:81px;height:8px;background:#d4d0c8;"></div>
</div>
<span style="left:1302px;top:858.3px;font-size:17.2px;line-height:22px;font-family:'Liberation Sans',sans-serif;color:#000;transform:scaleX(0.9425);transform-origin:0 50%;">Brush Tool</span>
<svg style="left:1344.8px;top:892.3px;" width="19" height="20.5" viewBox="0 0 19 20.5"><path d="M1.2 10.2L10.5 1.2V6H17.5V14.5H10.5V19.3Z" fill="#fff" stroke="#111" stroke-width="1.4" stroke-linejoin="round"/></svg>
<svg style="left:1374.3px;top:892.5px;" width="13" height="20" viewBox="0 0 13 20"><path d="M1.3 10L11.5 1.3V18.7Z" fill="#fff" stroke="#111" stroke-width="1.4" stroke-linejoin="round"/></svg>
<div style="left:1417.7px;top:898.2px;width:2.6px;height:2.6px;background:#222;border-radius:50%;"></div>
<svg style="left:1453.3px;top:892.5px;" width="13" height="20" viewBox="0 0 13 20"><path d="M11.7 10L1.5 1.3V18.7Z" fill="#fff" stroke="#111" stroke-width="1.4" stroke-linejoin="round"/></svg>
<svg style="left:1476.3px;top:892.3px;" width="19" height="20.5" viewBox="0 0 19 20.5"><path d="M17.8 10.2L8.5 1.2V6H1.5V14.5H8.5V19.3Z" fill="#fff" stroke="#111" stroke-width="1.4" stroke-linejoin="round"/></svg>
<div style="left:1397px;top:925.6px;width:45.7px;height:22.7px;background:#fff;box-shadow:inset 1px 1px #808080,inset -1px -1px #fff,inset 2px 2px #404040,inset -2px -2px #d4d0c8;"></div>
<span style="left:1405px;top:926.7px;font-size:16.6px;line-height:22px;font-family:'Liberation Sans',sans-serif;color:#000;transform:scaleX(0.9748);transform-origin:0 50%;">3</span>
<div style="left:1356px;top:960.2px;width:130.6px;height:3px;background:#808080;box-shadow:0 1px #fff,inset 0 1px #404040;"></div>
<svg style="left:1351.5px;top:956px;" width="11" height="17" viewBox="0 0 11 17"><path d="M1 0.5H9V11L5.0 16L1 11Z" fill="#d4d0c8" stroke="#404040" stroke-width="1"/><path d="M1.5 11V1H8" fill="none" stroke="#fff" stroke-width="1"/></svg>
<div style="left:1356.5px;top:973.5px;width:1.3px;height:3.5px;background:#222;"></div>
<div style="left:1482px;top:973.5px;width:1.3px;height:3.5px;background:#222;"></div>
<span style="left:1317.7px;top:989.3px;font-size:17.2px;line-height:22px;font-family:'Liberation Sans',sans-serif;color:#000;transform:scaleX(0.9510);transform-origin:0 50%;">Opacity:</span>
<div style="left:1386.3px;top:996.5px;width:87.1px;height:3px;background:#808080;box-shadow:0 1px #fff,inset 0 1px #404040;"></div>
<svg style="left:1449.5px;top:992px;" width="11" height="18" viewBox="0 0 11 18"><path d="M1 0.5H9V12L5.0 17L1 12Z" fill="#d4d0c8" stroke="#404040" stroke-width="1"/><path d="M1.5 12V1H8" fill="none" stroke="#fff" stroke-width="1"/></svg>
<div style="left:1389.5px;top:1010px;width:1.3px;height:3.5px;background:#222;"></div>
<div style="left:1470.5px;top:1010px;width:1.3px;height:3.5px;background:#222;"></div>
<div style="left:1482px;top:990.5px;width:45.4px;height:21.3px;background:#fff;box-shadow:inset 1px 1px #808080,inset -1px -1px #fff,inset 2px 2px #404040,inset -2px -2px #d4d0c8;"></div>
<span style="left:1490.5px;top:991.6px;font-size:16.6px;line-height:22px;font-family:'Liberation Sans',sans-serif;color:#000;transform:scaleX(0.9748);transform-origin:0 50%;">80</span>
<div style="left:1529px;top:990.5px;width:13.5px;height:10.65px;background:#d4d0c8;box-shadow:inset -1px -1px #404040,inset 1px 1px #fff,inset -2px -2px #808080,inset 2px 2px #d4d0c8;"></div>
<div style="left:1529px;top:1001.15px;width:13.5px;height:10.65px;background:#d4d0c8;box-shadow:inset -1px -1px #404040,inset 1px 1px #fff,inset -2px -2px #808080,inset 2px 2px #d4d0c8;"></div>
<svg style="left:1533.55px;top:994.625px;" width="4.4" height="2.6" viewBox="0 0 4.4 2.6"><path d="M0 2.6H4.4L2.2 0Z" fill="#000"/></svg>
<svg style="left:1533.55px;top:1005.08px;" width="4.4" height="2.6" viewBox="0 0 4.4 2.6"><path d="M0 0H4.4L2.2 2.6Z" fill="#000"/></svg>
<div style="left:1296px;top:1020px;width:250px;height:15.6px;overflow:hidden;">
<span style="left:10px;top:3.0px;font-size:17.2px;line-height:22px;font-family:'Liberation Sans',sans-serif;color:#000;transform:scaleX(0.8967);transform-origin:0 50%;">Pressure:</span>
<div style="left:83.6px;top:5px;width:18px;height:18px;background:#fff;box-shadow:inset 1px 1px #808080,inset -1px -1px #fff,inset 2px 2px #404040,inset -2px -2px #d4d0c8;"></div>
<svg style="left:87.6px;top:9px;" width="11" height="10" viewBox="0 0 11 10"><path d="M1 3.5L4 7L10 .8" fill="none" stroke="#000" stroke-width="2.2"/></svg>
<span style="left:108px;top:3.0px;font-size:17.2px;line-height:22px;font-family:'Liberation Sans',sans-serif;color:#000;transform:scaleX(0.8009);transform-origin:0 50%;">Size</span>
<div style="left:153px;top:5px;width:18px;height:18px;background:#fff;box-shadow:inset 1px 1px #808080,inset -1px -1px #fff,inset 2px 2px #404040,inset -2px -2px #d4d0c8;"></div>
<svg style="left:157px;top:9px;" width="11" height="10" viewBox="0 0 11 10"><path d="M1 3.5L4 7L10 .8" fill="none" stroke="#000" stroke-width="2.2"/></svg>
<span style="left:178px;top:3.0px;font-size:17.2px;line-height:22px;font-family:'Liberation Sans',sans-serif;color:#000;transform:scaleX(0.9432);transform-origin:0 50%;">Opacity</span>
</div>
<div style="left:1546px;top:879px;width:20px;height:156.5px;background:#e8e6e0;"></div>
<div style="left:1546px;top:879px;width:20px;height:20.7px;background:#d4d0c8;box-shadow:inset -1px -1px #404040,inset 1px 1px #fff,inset -2px -2px #808080,inset 2px 2px #d4d0c8;"></div>
<svg style="left:1551.5px;top:886.5px;" width="9" height="5" viewBox="0 0 9 5"><path d="M0 5H9L4.5 0Z" fill="#000"/></svg>
<div style="left:1546px;top:932px;width:20px;height:60px;background:#d4d0c8;box-shadow:inset -1px -1px #404040,inset 1px 1px #fff,inset -2px -2px #808080,inset 2px 2px #d4d0c8;"></div>
<div style="left:1546px;top:1013px;width:20px;height:22.4px;background:#d4d0c8;box-shadow:inset -1px -1px #404040,inset 1px 1px #fff,inset -2px -2px #808080,inset 2px 2px #d4d0c8;"></div>
<svg style="left:1551.5px;top:1021.5px;" width="9" height="5" viewBox="0 0 9 5"><path d="M0 0H9L4.5 5Z" fill="#000"/></svg>
<span style="left:1232px;top:1051.6px;font-size:17px;line-height:22px;font-family:'Liberation Sans',sans-serif;color:#000;transform:scaleX(0.9687);transform-origin:0 50%;">size:1000x1000 pix</span>
<span style="left:1384px;top:1051.6px;font-size:17px;line-height:22px;font-family:'Liberation Sans',sans-serif;color:#000;transform:scaleX(0.9798);transform-origin:0 50%;">mem:1236(13/469) Mb</span>
<svg style="left:1558px;top:1056px;" width="20" height="20" viewBox="0 0 20 20"><path d="M19 3L3 19M19 8L8 19M19 13L13 19" stroke="#808080" stroke-width="1.6"/><path d="M19 1.5L1.5 19M19 6.5L6.5 19M19 11.5L11.5 19" stroke="#fff" stroke-width="1"/></svg>
<div style="left:208px;top:170.8px;width:492px;height:268.8px;background:#d4d0c8;box-shadow:inset 1px 1px #d4d0c8,inset -1px -1px #404040,inset 2px 2px #fff,inset -2px -2px #808080;"></div>
<div style="left:211px;top:173.5px;width:486.5px;height:27.3px;background:linear-gradient(90deg,#0a246a 0%,#3b5a9c 30%,#7a9bd0 62%,#a6caf0 100%);"></div>
<span style="left:213.5px;top:179.5px;font-size:17.6px;line-height:22px;font-family:'Liberation Sans',sans-serif;color:#fff;transform:scaleX(0.9911);transform-origin:0 50%;-webkit-text-stroke:0.55px #fff;">Color Picker</span>
<div style="left:680px;top:176px;width:14.5px;height:22px;background:#d4d0c8;box-shadow:inset -1px -1px #404040,inset 1px 1px #fff,inset -2px -2px #808080,inset 2px 2px #d4d0c8;"></div>
<svg style="left:682.75px;top:182.5px;" width="9" height="9" viewBox="0 0 9 9"><path d="M1 1L8 8M8 1L1 8" stroke="#000" stroke-width="2" fill="none"/></svg>
<div style="left:226.7px;top:218.5px;width:167.5px;height:166.7px;background:linear-gradient(180deg,rgba(0,0,0,0) 0%,#000 100%),linear-gradient(90deg,#fff 0%,#00ff73 100%);border:1.5px solid #000;box-sizing:border-box;box-shadow:1px 1px 0 #fff;"></div>
<svg style="left:297.5px;top:267px;" width="14" height="14" viewBox="0 0 14 14"><circle cx="7" cy="7" r="5" fill="none" stroke="#063018" stroke-width="1.1"/><circle cx="7" cy="7" r="4" fill="none" stroke="#cfeedd" stroke-width="1"/></svg>
<svg style="left:405.7px;top:219px;" width="16" height="16" viewBox="0 0 16 16"><circle cx="8" cy="8" r="6.3" fill="#fff"/><path d="M3.2 12.8A6.8 6.8 0 0 1 12.8 3.2" fill="none" stroke="#808080" stroke-width="1.3"/><path d="M4.2 11.8A5.4 5.4 0 0 1 11.8 4.2" fill="none" stroke="#404040" stroke-width="1.2"/><path d="M12.8 3.2A6.8 6.8 0 0 1 3.2 12.8" fill="none" stroke="#fff" stroke-width="1.3"/><circle cx="8" cy="8" r="3.1" fill="#000"/></svg>
<svg style="left:405.7px;top:250.7px;" width="16" height="16" viewBox="0 0 16 16"><circle cx="8" cy="8" r="6.3" fill="#fff"/><path d="M3.2 12.8A6.8 6.8 0 0 1 12.8 3.2" fill="none" stroke="#808080" stroke-width="1.3"/><path d="M4.2 11.8A5.4 5.4 0 0 1 11.8 4.2" fill="none" stroke="#404040" stroke-width="1.2"/><path d="M12.8 3.2A6.8 6.8 0 0 1 3.2 12.8" fill="none" stroke="#fff" stroke-width="1.3"/></svg>
<svg style="left:405.7px;top:282.3px;" width="16" height="16" viewBox="0 0 16 16"><circle cx="8" cy="8" r="6.3" fill="#fff"/><path d="M3.2 12.8A6.8 6.8 0 0 1 12.8 3.2" fill="none" stroke="#808080" stroke-width="1.3"/><path d="M4.2 11.8A5.4 5.4 0 0 1 11.8 4.2" fill="none" stroke="#404040" stroke-width="1.2"/><path d="M12.8 3.2A6.8 6.8 0 0 1 3.2 12.8" fill="none" stroke="#fff" stroke-width="1.3"/></svg>
<span style="left:429.5px;top:215.7px;font-size:17px;line-height:22px;font-family:'Liberation Sans',sans-serif;color:#000;transform:scaleX(0.8552);transform-origin:0 50%;">H</span>
<span style="left:430px;top:247.4px;font-size:17px;line-height:22px;font-family:'Liberation Sans',sans-serif;color:#000;transform:scaleX(0.8378);transform-origin:0 50%;">S</span>
<span style="left:430px;top:279.1px;font-size:17px;line-height:22px;font-family:'Liberation Sans',sans-serif;color:#000;transform:scaleX(0.8378);transform-origin:0 50%;">B</span>
<div style="left:452.5px;top:218.3px;width:160.5px;height:14.7px;background:linear-gradient(90deg,#f00 0%,#ff0 17%,#0f0 33%,#0ff 50%,#00f 67%,#f0f 83%,#f00 100%);border:1.3px solid #000;box-sizing:border-box;box-shadow:0 1px 0 #fff,1px 0 0 #f0eee8;"></div>
<svg style="left:511px;top:234.2px;" width="17" height="10.3" viewBox="0 0 17 10.3"><path d="M1.5 8.5H15.5L8.5 1.6Z" fill="#fff" stroke="#000" stroke-width="1.5" stroke-linejoin="miter"/></svg>
<div style="left:452.5px;top:250.2px;width:160.5px;height:14.7px;background:linear-gradient(90deg,#a6a8a7,#62a682 45%,#0ea452);border:1.3px solid #000;box-sizing:border-box;box-shadow:0 1px 0 #fff,1px 0 0 #f0eee8;"></div>
<svg style="left:519.3px;top:266px;" width="17" height="10.3" viewBox="0 0 17 10.3"><path d="M1.5 8.5H15.5L8.5 1.6Z" fill="#fff" stroke="#000" stroke-width="1.5" stroke-linejoin="miter"/></svg>
<div style="left:452.5px;top:281.9px;width:160.5px;height:14.7px;background:linear-gradient(90deg,#000,#2e6446 45%,#84fcb8);border:1.3px solid #000;box-sizing:border-box;box-shadow:0 1px 0 #fff,1px 0 0 #f0eee8;"></div>
<svg style="left:551px;top:297.7px;" width="17" height="10.3" viewBox="0 0 17 10.3"><path d="M1.5 8.5H15.5L8.5 1.6Z" fill="#fff" stroke="#000" stroke-width="1.5" stroke-linejoin="miter"/></svg>
<div style="left:621.7px;top:218.7px;width:41.6px;height:23px;background:#fff;box-shadow:inset 1px 1px #808080,inset -1px -1px #fff,inset 2px 2px #404040,inset -2px -2px #d4d0c8;"></div>
<span style="left:630px;top:219.5px;font-size:16.6px;line-height:22px;font-family:'Liberation Sans',sans-serif;color:#000;transform:scaleX(0.9387);transform-origin:0 50%;">147</span>
<div style="left:665.8px;top:218.7px;width:13.4px;height:11.5px;background:#d4d0c8;box-shadow:inset -1px -1px #404040,inset 1px 1px #fff,inset -2px -2px #808080,inset 2px 2px #d4d0c8;"></div>
<div style="left:665.8px;top:230.2px;width:13.4px;height:11.5px;background:#d4d0c8;box-shadow:inset -1px -1px #404040,inset 1px 1px #fff,inset -2px -2px #808080,inset 2px 2px #d4d0c8;"></div>
<svg style="left:670.3px;top:223.25px;" width="4.4" height="2.6" viewBox="0 0 4.4 2.6"><path d="M0 2.6H4.4L2.2 0Z" fill="#000"/></svg>
<svg style="left:670.3px;top:234.55px;" width="4.4" height="2.6" viewBox="0 0 4.4 2.6"><path d="M0 0H4.4L2.2 2.6Z" fill="#000"/></svg>
<div style="left:621.7px;top:250.3px;width:41.6px;height:23px;background:#fff;box-shadow:inset 1px 1px #808080,inset -1px -1px #fff,inset 2px 2px #404040,inset -2px -2px #d4d0c8;"></div>
<span style="left:628.2px;top:251.2px;font-size:16.6px;line-height:22px;font-family:'Liberation Sans',sans-serif;color:#000;transform:scaleX(0.9748);transform-origin:0 50%;">47</span>
<div style="left:665.8px;top:250.3px;width:13.4px;height:11.5px;background:#d4d0c8;box-shadow:inset -1px -1px #404040,inset 1px 1px #fff,inset -2px -2px #808080,inset 2px 2px #d4d0c8;"></div>
<div style="left:665.8px;top:261.8px;width:13.4px;height:11.5px;background:#d4d0c8;box-shadow:inset -1px -1px #404040,inset 1px 1px #fff,inset -2px -2px #808080,inset 2px 2px #d4d0c8;"></div>
<svg style="left:670.3px;top:254.85px;" width="4.4" height="2.6" viewBox="0 0 4.4 2.6"><path d="M0 2.6H4.4L2.2 0Z" fill="#000"/></svg>
<svg style="left:670.3px;top:266.15px;" width="4.4" height="2.6" viewBox="0 0 4.4 2.6"><path d="M0 0H4.4L2.2 2.6Z" fill="#000"/></svg>
<div style="left:621.7px;top:282px;width:41.6px;height:23px;background:#fff;box-shadow:inset 1px 1px #808080,inset -1px -1px #fff,inset 2px 2px #404040,inset -2px -2px #d4d0c8;"></div>
<span style="left:628.2px;top:282.9px;font-size:16.6px;line-height:22px;font-family:'Liberation Sans',sans-serif;color:#000;transform:scaleX(0.9748);transform-origin:0 50%;">67</span>
<div style="left:665.8px;top:282px;width:13.4px;height:11.5px;background:#d4d0c8;box-shadow:inset -1px -1px #404040,inset 1px 1px #fff,inset -2px -2px #808080,inset 2px 2px #d4d0c8;"></div>
<div style="left:665.8px;top:293.5px;width:13.4px;height:11.5px;background:#d4d0c8;box-shadow:inset -1px -1px #404040,inset 1px 1px #fff,inset -2px -2px #808080,inset 2px 2px #d4d0c8;"></div>
<svg style="left:670.3px;top:286.55px;" width="4.4" height="2.6" viewBox="0 0 4.4 2.6"><path d="M0 2.6H4.4L2.2 0Z" fill="#000"/></svg>
<svg style="left:670.3px;top:297.85px;" width="4.4" height="2.6" viewBox="0 0 4.4 2.6"><path d="M0 0H4.4L2.2 2.6Z" fill="#000"/></svg>
<div style="left:402.5px;top:313.3px;width:41px;height:68.7px;background:linear-gradient(180deg,#5aab7e 0,#5aab7e 51%,#8b55ae 51%);box-shadow:inset 1px 1px #808080,inset -1px -1px #fff,inset 2px 2px #6a7a70;"></div>
<span style="left:451.7px;top:326.8px;font-size:17px;line-height:22px;font-family:'Liberation Sans',sans-serif;color:#000;transform:scaleX(0.8552);transform-origin:0 50%;">R</span>
<div style="left:467px;top:325px;width:41.7px;height:24px;background:#fff;box-shadow:inset 1px 1px #808080,inset -1px -1px #fff,inset 2px 2px #404040,inset -2px -2px #d4d0c8;"></div>
<span style="left:473.5px;top:325.8px;font-size:16.6px;line-height:22px;font-family:'Liberation Sans',sans-serif;color:#000;transform:scaleX(0.9748);transform-origin:0 50%;">90</span>
<div style="left:511px;top:325px;width:13.5px;height:12px;background:#d4d0c8;box-shadow:inset -1px -1px #404040,inset 1px 1px #fff,inset -2px -2px #808080,inset 2px 2px #d4d0c8;"></div>
<div style="left:511px;top:337px;width:13.5px;height:12px;background:#d4d0c8;box-shadow:inset -1px -1px #404040,inset 1px 1px #fff,inset -2px -2px #808080,inset 2px 2px #d4d0c8;"></div>
<svg style="left:515.55px;top:329.8px;" width="4.4" height="2.6" viewBox="0 0 4.4 2.6"><path d="M0 2.6H4.4L2.2 0Z" fill="#000"/></svg>
<svg style="left:515.55px;top:341.6px;" width="4.4" height="2.6" viewBox="0 0 4.4 2.6"><path d="M0 0H4.4L2.2 2.6Z" fill="#000"/></svg>
<span style="left:532.5px;top:326.8px;font-size:17px;line-height:22px;font-family:'Liberation Sans',sans-serif;color:#000;transform:scaleX(0.8319);transform-origin:0 50%;">G</span>
<div style="left:548px;top:325px;width:41.5px;height:24px;background:#fff;box-shadow:inset 1px 1px #808080,inset -1px -1px #fff,inset 2px 2px #404040,inset -2px -2px #d4d0c8;"></div>
<span style="left:556px;top:325.8px;font-size:16.6px;line-height:22px;font-family:'Liberation Sans',sans-serif;color:#000;transform:scaleX(0.9568);transform-origin:0 50%;">171</span>
<div style="left:592px;top:325px;width:13.5px;height:12px;background:#d4d0c8;box-shadow:inset -1px -1px #404040,inset 1px 1px #fff,inset -2px -2px #808080,inset 2px 2px #d4d0c8;"></div>
<div style="left:592px;top:337px;width:13.5px;height:12px;background:#d4d0c8;box-shadow:inset -1px -1px #404040,inset 1px 1px #fff,inset -2px -2px #808080,inset 2px 2px #d4d0c8;"></div>
<svg style="left:596.55px;top:329.8px;" width="4.4" height="2.6" viewBox="0 0 4.4 2.6"><path d="M0 2.6H4.4L2.2 0Z" fill="#000"/></svg>
<svg style="left:596.55px;top:341.6px;" width="4.4" height="2.6" viewBox="0 0 4.4 2.6"><path d="M0 0H4.4L2.2 2.6Z" fill="#000"/></svg>
<span style="left:613.3px;top:326.8px;font-size:17px;line-height:22px;font-family:'Liberation Sans',sans-serif;color:#000;transform:scaleX(0.8378);transform-origin:0 50%;">B</span>
<div style="left:628.3px;top:325px;width:42px;height:24px;background:#fff;box-shadow:inset 1px 1px #808080,inset -1px -1px #fff,inset 2px 2px #404040,inset -2px -2px #d4d0c8;"></div>
<span style="left:636.8px;top:325.8px;font-size:16.6px;line-height:22px;font-family:'Liberation Sans',sans-serif;color:#000;transform:scaleX(0.9387);transform-origin:0 50%;">126</span>
<div style="left:672.5px;top:325px;width:13px;height:12px;background:#d4d0c8;box-shadow:inset -1px -1px #404040,inset 1px 1px #fff,inset -2px -2px #808080,inset 2px 2px #d4d0c8;"></div>
<div style="left:672.5px;top:337px;width:13px;height:12px;background:#d4d0c8;box-shadow:inset -1px -1px #404040,inset 1px 1px #fff,inset -2px -2px #808080,inset 2px 2px #d4d0c8;"></div>
<svg style="left:676.8px;top:329.8px;" width="4.4" height="2.6" viewBox="0 0 4.4 2.6"><path d="M0 2.6H4.4L2.2 0Z" fill="#000"/></svg>
<svg style="left:676.8px;top:341.6px;" width="4.4" height="2.6" viewBox="0 0 4.4 2.6"><path d="M0 0H4.4L2.2 2.6Z" fill="#000"/></svg>
<div style="left:478px;top:379.7px;width:94px;height:25.3px;background:#000;"></div>
<div style="left:479px;top:380.7px;width:92px;height:23.3px;background:#d4d0c8;box-shadow:inset -1px -1px #404040,inset 1px 1px #fff,inset -2px -2px #808080,inset 2px 2px #d4d0c8;"></div>
<span style="left:514px;top:380.6px;font-size:17px;line-height:22px;font-family:'Liberation Sans',sans-serif;color:#000;transform:scaleX(0.8550);transform-origin:0 50%;">OK</span>
<div style="left:583.7px;top:380px;width:93px;height:25px;background:#d4d0c8;box-shadow:inset -1px -1px #404040,inset 1px 1px #fff,inset -2px -2px #808080,inset 2px 2px #d4d0c8;"></div>
<span style="left:599.5px;top:380.6px;font-size:17px;line-height:22px;font-family:'Liberation Sans',sans-serif;color:#000;transform:scaleX(0.8555);transform-origin:0 50%;">CANCEL</span>
<div style="left:234px;top:398.3px;width:20px;height:20px;background:#050505;border:1.3px solid #000;box-sizing:border-box;box-shadow:inset 0 0 0 1.2px #eee;"></div>
<svg style="left:262px;top:398.3px;" width="20" height="20" viewBox="0 0 20 20"><rect width="20" height="20" fill="#fff"/><rect x="4.3" y="4.3" width="4.0" height="4.0" fill="#d6d6d6"/><rect x="4.3" y="12.3" width="4.0" height="4.0" fill="#d6d6d6"/><rect x="8.3" y="8.3" width="4.0" height="4.0" fill="#d6d6d6"/><rect x="12.3" y="4.3" width="4.0" height="4.0" fill="#d6d6d6"/><rect x="12.3" y="12.3" width="4.0" height="4.0" fill="#d6d6d6"/><rect x=".7" y=".7" width="18.6" height="18.6" fill="none" stroke="#000" stroke-width="1.4"/></svg>
</div></body></html>
